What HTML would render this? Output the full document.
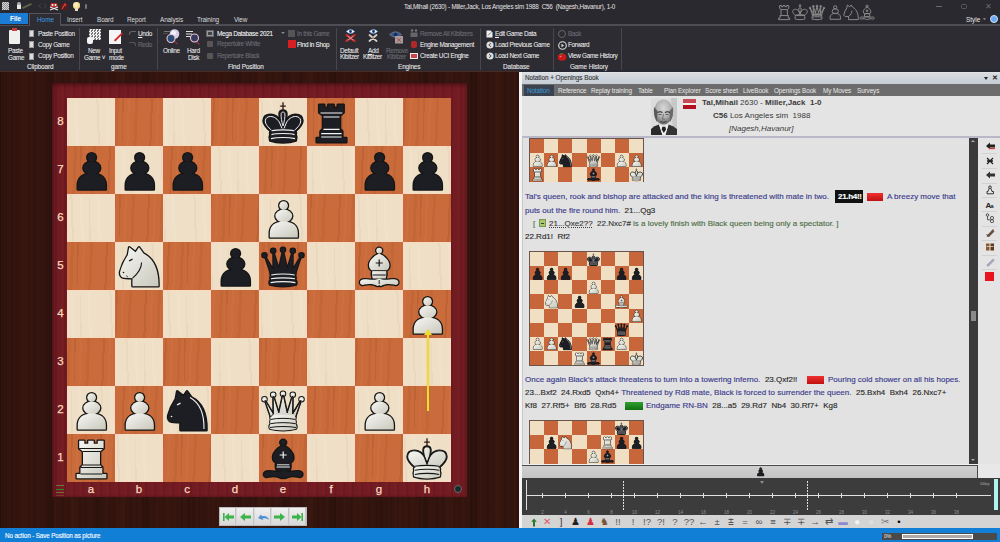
<!DOCTYPE html><html><head><meta charset="utf-8"><style>
*{margin:0;padding:0;box-sizing:border-box}
html,body{width:1000px;height:542px;overflow:hidden;background:#2b2a30;font-family:"Liberation Sans",sans-serif;font-size:7px;color:#e6e6e6}
.a{position:absolute}
.t{white-space:pre;line-height:10px;transform:translateY(-5px)}
.rb{font-size:6.4px;color:#f0f0f0;letter-spacing:-0.3px;-webkit-text-stroke:0.05px #f0f0f0}
.gr{color:#6c6c72;-webkit-text-stroke:0.1px #6c6c72}
.gl{font-size:6.4px;color:#e4e4e4;letter-spacing:-0.1px;-webkit-text-stroke:0.1px #e4e4e4}
#left{left:0;top:72px;width:519px;height:457px;background:#33140e;
 background-image:repeating-linear-gradient(90deg,rgba(0,0,0,.10) 0 1px,rgba(0,0,0,0) 1px 4px,rgba(110,55,35,.10) 4px 5px,rgba(0,0,0,0) 5px 11px,rgba(0,0,0,.08) 11px 13px,rgba(0,0,0,0) 13px 17px),repeating-linear-gradient(90deg,rgba(0,0,0,.10) 0 7px,rgba(0,0,0,0) 7px 23px,rgba(90,45,25,.08) 23px 31px,rgba(0,0,0,0) 31px 47px);}
#frame{left:52px;top:83px;width:415px;height:414px;background:#721b22;
 background-image:repeating-linear-gradient(90deg,rgba(255,80,80,.03) 0 3px,rgba(0,0,0,.06) 3px 5px,rgba(0,0,0,0) 5px 9px);box-shadow:inset 0 2px 4px rgba(0,0,0,.35),inset 2px 0 3px rgba(0,0,0,.2)}
.lbl{color:#f8dcc0;font-size:11.5px;text-align:center;width:48px;line-height:12px;-webkit-text-stroke:0.25px #f8dcc0}
.rk{color:#f8dcc0;font-size:11.5px;width:12px;text-align:center;line-height:12px;-webkit-text-stroke:0.25px #f8dcc0}
.nt{font-size:8px;color:#2a2a2a;white-space:pre;line-height:10px;transform:translateY(-5px);-webkit-text-stroke:0.15px currentColor}
.cm{color:#3c3c8c}
.gv{color:#4f6f45}
</style></head><body><svg width="0" height="0" style="position:absolute"><defs><linearGradient id="gw" x1="0" y1="0" x2="1" y2="1"><stop offset="0" stop-color="#f8f8f4"/><stop offset="1" stop-color="#c8c8bc"/></linearGradient></defs></svg><div class="a" style="left:0;top:0;width:1000px;height:25px;background:#2a292f"></div><div class="a" style="left:1.5px;top:2px;width:7.5px;height:8px;background:repeating-conic-gradient(#d8d8d8 0 25%,#8a8a8a 0 50%) 0 0/2px 2px"></div><div class="a" style="left:16.5px;top:2px;width:4.5px;height:3px;background:#aaa;border-radius:2px 2px 0 0"></div><div class="a" style="left:17px;top:5px;width:4px;height:4px;background:#e8e8e8"></div><div class="a" style="left:22px;top:5px;width:10px;height:2px;background:#5a6448;transform:rotate(-25deg)"></div><div class="a" style="left:39px;top:4px;width:4px;height:4px;border-left:1px solid #3c3c40;border-bottom:1px solid #3c3c40;transform:rotate(45deg)"></div><div class="a" style="left:42px;top:4px;width:4px;height:4px;border-right:1px solid #3c3c40;border-top:1px solid #3c3c40;transform:rotate(45deg)"></div><svg class="a" style="left:49px;top:1.5px" width="10" height="9" viewBox="0 0 10 9"><path d="M2,1h6l1,4h-8z" fill="#b82828"/><path d="M1,5L9,8M9,5L1,8" stroke="#f0e0e0" stroke-width="1.3"/><circle cx="3.5" cy="3" r="1" fill="#fff"/><circle cx="6.5" cy="3" r="1" fill="#fff"/></svg><svg class="a" style="left:60px;top:1.5px" width="8" height="9" viewBox="0 0 8 9"><circle cx="4" cy="4.5" r="3.8" fill="#5a1a1a"/><path d="M2,7L5,2L6,4" stroke="#e04040" stroke-width="1.2" fill="none"/></svg><div class="a" style="left:73px;top:2px;width:6.5px;height:6.5px;background:radial-gradient(circle at 40% 40%,#fff8d0,#e8c860);border-radius:50%"></div><div class="a" style="left:74.5px;top:8px;width:3.5px;height:2.5px;background:#e8e0c0"></div><div class="a" style="left:84.5px;top:4px;width:2.5px;height:5px;background:#777;border-radius:1px"></div><div class="a t " style="left:404px;top:6.5px;font-size:6.3px;letter-spacing:-0.22px;color:#e4e4e4">Tal,Mihail (2630) - Miller,Jack, Los Angeles sim 1988  C56  (Nagesh,Havanur), 1-0</div><svg class="a" style="left:775px;top:2.5px" width="18" height="18" viewBox="0 0 48 48"><g fill="none" stroke="#8c8c8c" stroke-width="2.6" stroke-linejoin="round"><path d="M12.2,6.8L17.3,6.8L17.3,9.8L21.3,9.8L21.3,6.8L26.7,6.8L26.7,9.8L30.8,9.8L30.8,6.8L36.6,6.8L36.6,14.5L33,17.5L33,31L35.3,33.5L35.3,40L39.3,40L39.3,44.3L9.7,44.3L9.7,40L13.5,40L13.5,33.5L16,31L16,17.5L12.2,14.5Z"/><path d="M16,17.5H33M13.5,33.5H35.3"/></g></svg><svg class="a" style="left:791px;top:2.5px" width="18" height="18" viewBox="0 0 48 48"><g fill="none" stroke="#8c8c8c" stroke-width="2.6" stroke-linejoin="round"><path d="M12.2,33.5C8,30 4.5,26 4.6,22.5C4.8,18.5 8,16.8 11.5,16.8C16,16.8 19.5,19.5 22,24L24,29L26,24C28.5,19.5 32,16.8 36.5,16.8C40,16.8 43.2,18.5 43.4,22.5C43.5,26 40,30 35.8,33.5Z"/><path d="M24,30C22,25 20.3,19 20.6,15.5C20.9,13.5 22.3,12.6 24,12.6C25.7,12.6 27.1,13.5 27.4,15.5C27.7,19 26,25 24,30Z"/><path d="M12,32.3C18,31 30,31 36,32.3C37,34 37,35.5 36.6,36.4C37.4,38 37.4,41 36.8,42.6C30,45 18,45 11.2,42.6C10.6,41 10.6,38 11.4,36.4C11,35.5 11,34 12,32.3Z"/><path d="M24,3V12M20.5,7.5H27.5"/></g></svg><svg class="a" style="left:808px;top:2.5px" width="18" height="18" viewBox="0 0 48 48"><g fill="none" stroke="#8c8c8c" stroke-width="2.6" stroke-linejoin="round"><path d="M11.5,31L5.5,13.3L14.4,28L14.2,8.8L19.8,27L24,7.8L28.2,27L33.8,8.8L33.6,28L42.5,13.3L36.5,31Z"/><path d="M11.8,29.8C18,28.4 30,28.4 36.2,29.8C36.8,31 36.8,32.5 36.3,33.4C37,35 37,36.5 36.5,37.7C37.6,39 37.8,41.5 37.2,42.8C30,45 18,45 10.8,42.8C10.2,41.5 10.4,39 11.5,37.7C11,36.5 11,35 11.7,33.4C11.2,32.5 11.2,31 11.8,29.8Z"/><circle cx="5.5" cy="13.3" r="2.3"/><circle cx="14.2" cy="8.8" r="2.3"/><circle cx="24" cy="7.8" r="2.3"/><circle cx="33.8" cy="8.8" r="2.3"/><circle cx="42.5" cy="13.3" r="2.3"/><path d="M11.7,33.4C18,32 30,32 36.3,33.4M11.5,37.7C18,36.3 30,36.3 36.5,37.7"/></g></svg><svg class="a" style="left:825.5px;top:2.5px" width="18" height="18" viewBox="0 0 48 48"><g fill="none" stroke="#8c8c8c" stroke-width="2.6" stroke-linejoin="round"><circle cx="24.6" cy="11.5" r="4.3"/><ellipse cx="24.8" cy="22" rx="8.4" ry="6.4"/><path d="M10.8,43.4L10.8,39C10.8,31 17,27.5 24.8,27.5C32.6,27.5 38.8,31 38.8,39L38.8,43.4Z"/></g></svg><svg class="a" style="left:841.5px;top:2.5px" width="18" height="18" viewBox="0 0 48 48"><g fill="none" stroke="#8c8c8c" stroke-width="2.6" stroke-linejoin="round"><path d="M17.5,44.3L43.5,44.3C43.8,31 40.5,17.5 28.5,11.5L24,5.3L20.6,10.3L14.2,5.3L12.8,13C9.5,18 6.5,24.5 5.2,29.5C4.5,32.5 6,35.5 8.6,35.8C11.5,36.2 14.5,36 17.6,36.2C17.4,39 17.4,42 17.5,44.3Z"/><path d="M26.6,20.5C26.5,26 24,30.5 17.6,36.2"/></g></svg><svg class="a" style="left:858px;top:2.5px" width="18" height="18" viewBox="0 0 48 48"><g fill="none" stroke="#8c8c8c" stroke-width="2.6" stroke-linejoin="round"><circle cx="24.2" cy="8.6" r="2.9"/><path d="M24.2,11.4C30,14 34.6,19 34.4,23.5C34.3,26.5 32.5,28 31,28.6L17.4,28.6C15.9,28 14.1,26.5 14,23.5C13.8,19 18.4,14 24.2,11.4Z"/><path d="M17.6,28.2L30.8,28.2C31.6,30 31.5,34 30.6,36.4L17.8,36.4C16.9,34 16.8,30 17.6,28.2Z"/><path d="M24.2,36.6C20,38.8 14,37.3 9.5,37.3C6.5,37.3 4.8,38.8 5,40.8C5.3,42.8 7.5,43.4 9.5,42.6C14,41.6 19,42 22,43.8C23,44.3 24.2,43.6 24.2,42.6C24.2,43.6 25.4,44.3 26.4,43.8C29.4,42 34.4,41.6 38.9,42.6C40.9,43.4 43.1,42.8 43.4,40.8C43.6,38.8 41.9,37.3 38.9,37.3C34.4,37.3 28.4,38.8 24.2,36.6Z"/><path d="M24.2,17.5V24.5M20.7,21H27.7"/></g></svg><div class="a" style="left:936px;top:6px;width:6px;height:1px;background:#6a6a6a"></div><div class="a" style="left:961px;top:3.5px;width:5.5px;height:5.5px;border:1px solid #5a5a5a;border-radius:1.5px"></div><div class="a" style="left:984.5px;top:1.5px;font-size:8px;color:#6a6a6a;line-height:10px">&#x2715;</div><div class="a" style="left:0;top:12.6px;width:28px;height:11.8px;background:#1a7cd4"></div><div class="a t " style="left:10px;top:19.3px;font-size:6.4px;color:#fff;font-weight:bold">File</div><div class="a" style="left:29px;top:13px;width:32px;height:12.5px;border:1px solid #55545b;border-bottom:none;background:#2e2d33"></div><div class="a t " style="left:37px;top:19.5px;font-size:6.4px;color:#3c9ee0">Home</div><div class="a t " style="left:67px;top:19.5px;font-size:6.4px;color:#dcdcdc;letter-spacing:-0.1px">Insert</div><div class="a t " style="left:97px;top:19.5px;font-size:6.4px;color:#dcdcdc;letter-spacing:-0.1px">Board</div><div class="a t " style="left:127px;top:19.5px;font-size:6.4px;color:#dcdcdc;letter-spacing:-0.1px">Report</div><div class="a t " style="left:160px;top:19.5px;font-size:6.4px;color:#dcdcdc;letter-spacing:-0.1px">Analysis</div><div class="a t " style="left:197px;top:19.5px;font-size:6.4px;color:#dcdcdc;letter-spacing:-0.1px">Training</div><div class="a t " style="left:234px;top:19.5px;font-size:6.4px;color:#dcdcdc;letter-spacing:-0.1px">View</div><div class="a t " style="left:966px;top:19.5px;font-size:6.4px;color:#e8e8e8">Style</div><div class="a" style="left:983px;top:18px;width:3px;height:2px;border-top:2px solid #777;border-left:1.5px solid transparent;border-right:1.5px solid transparent"></div><div class="a" style="left:990px;top:15px;width:8px;height:8px;background:#6aa8f0;border-radius:50%;border:1px solid #cfe3fa"></div><div class="a" style="left:60px;top:24px;width:940px;height:1.5px;background:#4e4d54"></div><div class="a" style="left:0;top:25.5px;width:1000px;height:46.5px;background:#2d2c32"></div><div class="a" style="left:0;top:24.5px;width:29px;height:1px;background:#4e4d54"></div><div class="a" style="left:0;top:68.5px;width:1000px;height:3.5px;background:linear-gradient(#2b2c34,#262833)"></div><div class="a" style="left:0;top:71px;width:519px;height:2px;background:#4a2a22"></div><div class="a" style="left:79px;top:28px;width:1px;height:42px;background:#48474e"></div><div class="a" style="left:157px;top:28px;width:1px;height:42px;background:#48474e"></div><div class="a" style="left:336px;top:28px;width:1px;height:42px;background:#48474e"></div><div class="a" style="left:480px;top:28px;width:1px;height:42px;background:#48474e"></div><div class="a" style="left:553px;top:28px;width:1px;height:42px;background:#48474e"></div><div class="a" style="left:621px;top:28px;width:1px;height:42px;background:#48474e"></div><div class="a" style="left:9px;top:30px;width:11px;height:14px;background:#f2f0ee;border-radius:1px"></div><div class="a" style="left:12px;top:28px;width:5px;height:3px;background:#c83c3c"></div><div class="a t rb" style="left:8px;top:50.5px;">Paste</div><div class="a t rb" style="left:8px;top:57.5px;">Game</div><div class="a" style="left:29px;top:30.0px;width:5px;height:7px;background:#ddd;border:1px solid #999"></div><div class="a" style="left:29px;top:41.0px;width:5px;height:7px;background:#ddd;border:1px solid #999"></div><div class="a" style="left:29px;top:52.5px;width:5px;height:7px;background:#ddd;border:1px solid #999"></div><div class="a t rb" style="left:38px;top:33.5px;">Paste Position</div><div class="a t rb" style="left:38px;top:44.8px;">Copy Game</div><div class="a t rb" style="left:38px;top:56.2px;">Copy Position</div><div class="a t gl" style="left:27px;top:67px;">Clipboard</div><div class="a" style="left:89px;top:29px;width:12px;height:11px;background:repeating-conic-gradient(#f0f0f0 0 25%,#777 0 50%) 0 0/3px 3px"></div><div class="a" style="left:87px;top:37px;width:6px;height:7px;background:#f4f4f4;border-radius:2px"></div><div class="a t rb" style="left:88px;top:50.5px;">New</div><div class="a t rb" style="left:84px;top:57.5px;">Game &#709;</div><div class="a" style="left:109px;top:30px;width:12px;height:14px;background:#f4f4f4"></div><div class="a" style="left:113px;top:36px;width:11px;height:2px;background:#d02828;transform:rotate(-45deg)"></div><div class="a t rb" style="left:109px;top:50.5px;">Input</div><div class="a t rb" style="left:109px;top:57.5px;">mode</div><div class="a" style="left:129px;top:31px;width:7px;height:4px;border-top:1px solid #666;border-left:1px solid #666;border-radius:3px 0 0 0"></div><div class="a t rb" style="left:138px;top:33.5px;"><u>U</u>ndo</div><div class="a" style="left:129px;top:42px;width:7px;height:4px;border-top:1px solid #555;border-right:1px solid #555;border-radius:0 3px 0 0"></div><div class="a t rb gr" style="left:138px;top:44.8px;">Redo</div><div class="a t gl" style="left:111px;top:67px;">game</div><svg class="a" style="left:162px;top:28px" width="20" height="17" viewBox="0 0 20 17"><path d="M2,3.5H8" stroke="#777" stroke-width="1"/><path d="M1,5.5H6" stroke="#555" stroke-width=".8"/><circle cx="12.5" cy="6" r="4.8" fill="#d8d0e8"/><circle cx="11.5" cy="5" r="2.5" fill="#f4f0fa"/><path d="M12.5,13.5L15.5,16" stroke="#8a3040" stroke-width="1.6"/><circle cx="9" cy="10.5" r="4" fill="#2a4a78" stroke="#e8c8d0" stroke-width="1.1"/></svg><div class="a t rb" style="left:163px;top:50.7px;">Online</div><svg class="a" style="left:185px;top:30px" width="18" height="15" viewBox="0 0 18 15"><path d="M1,1.5H8M1,4H7M1,6.5H7" stroke="#e0e0e0" stroke-width="1.2"/><path d="M11.5,11.5L14.5,14.5" stroke="#8a3040" stroke-width="1.6"/><circle cx="9.5" cy="8" r="4" fill="#3a3a60" stroke="#e8c8d0" stroke-width="1.1"/></svg><div class="a t rb" style="left:187px;top:50.7px;">Hard</div><div class="a t rb" style="left:188px;top:57.5px;">Disk</div><div class="a" style="left:206px;top:29.5px;width:8px;height:7px;background:#9a9a9a;border:1px solid #666"></div><div class="a" style="left:208px;top:31.5px;width:4px;height:3px;background:#444"></div><div class="a t rb" style="left:217px;top:33.5px;color:#ffffff">Mega Database 2021</div><div class="a" style="left:281px;top:32px;width:0;height:0;border-top:2px solid #888;border-left:2px solid transparent;border-right:2px solid transparent"></div><div class="a" style="left:207px;top:41px;width:6px;height:6px;background:#5a5555;border-radius:1px"></div><div class="a t rb gr" style="left:217px;top:44.2px;">Repertoire White</div><div class="a" style="left:207px;top:53px;width:6px;height:6px;background:#5a5555;border-radius:1px"></div><div class="a t rb gr" style="left:217px;top:55.9px;">Repertoire Black</div><div class="a t gl" style="left:228px;top:67px;">Find Position</div><div class="a" style="left:288px;top:30px;width:7px;height:7px;background:#555"></div><div class="a t rb gr" style="left:297px;top:33.5px;">In this Game</div><div class="a" style="left:288px;top:40px;width:8px;height:8px;background:#d42020"></div><div class="a t rb" style="left:297px;top:44.6px;color:#fff">Find in Shop</div><svg class="a" style="left:346px;top:29px" width="9" height="5" viewBox="0 0 9 5"><path d="M0.3,2.5Q4.5,-1.5 8.7,2.5Q4.5,6.5 0.3,2.5Z" fill="#f4f8ff" stroke="#6aa0e0" stroke-width=".6"/><circle cx="4.5" cy="2.5" r="1.4" fill="#1a3a6a"/></svg><svg class="a" style="left:345px;top:34px" width="11" height="8" viewBox="0 0 11 8"><path d="M1.5,1L9.5,7M9.5,1L1.5,7" stroke="#b82a2a" stroke-width="2.4" stroke-linecap="round"/><path d="M2.5,2L8.5,6.2M8.5,2L2.5,6.2" stroke="#f0c0c0" stroke-width=".7"/></svg><svg class="a" style="left:368.5px;top:29px" width="9" height="5" viewBox="0 0 9 5"><path d="M0.3,2.5Q4.5,-1.5 8.7,2.5Q4.5,6.5 0.3,2.5Z" fill="#f4f8ff" stroke="#6aa0e0" stroke-width=".6"/><circle cx="4.5" cy="2.5" r="1.4" fill="#1a3a6a"/></svg><svg class="a" style="left:368px;top:34px" width="10" height="8" viewBox="0 0 10 8"><path d="M1.5,1L8.5,7M8.5,1L1.5,7" stroke="#d8d0c8" stroke-width="1.8" stroke-linecap="round"/><path d="M5,3V5" stroke="#806050" stroke-width="1"/></svg><svg class="a" style="left:389px;top:30px" width="15" height="14" viewBox="0 0 15 14"><path d="M0.5,4.5Q6.5,-1 12.5,4.5Q6.5,10 0.5,4.5Z" fill="#3a5a8a" stroke="#6a7a90" stroke-width=".8"/><circle cx="6.5" cy="4.5" r="1.8" fill="#1a2a5a"/><rect x="6" y="6" width="8" height="7.5" fill="#a89a9a"/><path d="M8,8L12,12M12,8L8,12" stroke="#b04040" stroke-width=".8"/></svg><div class="a t rb" style="left:340px;top:50.7px;">Default</div><div class="a t rb" style="left:340px;top:57px;">Kibitzer</div><div class="a t rb" style="left:368px;top:50.7px;"><u>A</u>dd</div><div class="a t rb" style="left:363px;top:57px;">Kibitzer</div><div class="a t rb gr" style="left:386px;top:50.7px;">Remove</div><div class="a t rb gr" style="left:387px;top:57px;">Kibitzer</div><svg class="a" style="left:410px;top:29px" width="8" height="8" viewBox="0 0 8 8"><circle cx="2" cy="1.5" r="1.2" fill="#777"/><circle cx="6" cy="1.5" r="1.2" fill="#777"/><rect x="0.5" y="3.5" width="7" height="4.5" fill="#666"/></svg><div class="a t rb gr" style="left:420px;top:33.5px;">Remove All Kibitzers</div><div class="a" style="left:411px;top:41px;width:6px;height:7px;background:#b02828;border-radius:2px"></div><div class="a t rb" style="left:420px;top:44.8px;">Engine Management</div><div class="a" style="left:410px;top:53px;width:8px;height:6px;background:#c84848;border:1px solid #eee"></div><div class="a t rb" style="left:420px;top:56px;">Create UCI Engine</div><div class="a t gl" style="left:398px;top:67px;">Engines</div><svg class="a" style="left:486px;top:29.5px" width="7" height="8" viewBox="0 0 7 8"><path d="M0.5,0.5H4.5L6.5,2.5V7.5H0.5Z" fill="#eee"/><path d="M2,5.5L5,2.5" stroke="#555" stroke-width=".8"/></svg><div class="a t rb" style="left:495px;top:33.5px;"><u>E</u>dit Game Data</div><svg class="a" style="left:485.5px;top:41px" width="8" height="8" viewBox="0 0 8 8"><circle cx="4" cy="4" r="3.6" fill="#ddd"/><path d="M5,2.2L2.8,4L5,5.8" stroke="#555" stroke-width="1" fill="none"/></svg><div class="a t rb" style="left:495px;top:44.8px;">Load Previous Game</div><svg class="a" style="left:485.5px;top:52px" width="8" height="8" viewBox="0 0 8 8"><circle cx="4" cy="4" r="3.6" fill="#ddd"/><path d="M3,2.2L5.2,4L3,5.8" stroke="#555" stroke-width="1" fill="none"/></svg><div class="a t rb" style="left:495px;top:56px;">Load Next Game</div><div class="a t gl" style="left:503px;top:67px;">Database</div><div class="a" style="left:558px;top:30px;width:8px;height:8px;border:1px solid #666;border-radius:50%"></div><div class="a t rb gr" style="left:568px;top:33.5px;">Back</div><svg class="a" style="left:557.5px;top:40.5px" width="9" height="9" viewBox="0 0 9 9"><circle cx="4.5" cy="4.5" r="3.8" fill="none" stroke="#e0e0e0" stroke-width="1.1"/><path d="M3.5,2.8L6,4.5L3.5,6.2Z" fill="#e0e0e0"/></svg><div class="a t rb" style="left:568px;top:44.8px;">Forward</div><svg class="a" style="left:557px;top:51.5px" width="10" height="9" viewBox="0 0 10 9"><ellipse cx="5" cy="5.2" rx="4.3" ry="3.6" fill="#c81818"/><path d="M2,2.5Q4,0.5 6.5,1.5Q5,3 2,2.5Z" fill="#3a8a3a"/><ellipse cx="3.5" cy="4.5" rx="1" ry=".7" fill="#f08080"/></svg><div class="a t rb" style="left:568px;top:56px;">View Game History</div><div class="a t gl" style="left:570px;top:67px;">Game History</div><div id="left" class="a"></div><div id="frame" class="a"></div><div class="a" style="left:67.00px;top:98.00px;width:48.30px;height:48.30px;background:#efdfc6;background-image:repeating-linear-gradient(88deg,rgba(150,90,40,.05) 0 2px,rgba(0,0,0,0) 2px 9px,rgba(255,255,255,.08) 9px 12px,rgba(0,0,0,0) 12px 31px);background-position:0px 0;box-shadow:inset 0 0 0 1px rgba(255,215,190,.7)"></div><div class="a" style="left:115.00px;top:98.00px;width:48.30px;height:48.30px;background:#c96b3b;background-image:repeating-linear-gradient(92deg,rgba(90,30,0,.10) 0 2px,rgba(0,0,0,0) 2px 6px,rgba(255,160,100,.07) 6px 8px,rgba(0,0,0,0) 8px 13px,rgba(90,30,0,.06) 13px 16px,rgba(0,0,0,0) 16px 29px);background-position:7px 0"></div><div class="a" style="left:163.00px;top:98.00px;width:48.30px;height:48.30px;background:#efdfc6;background-image:repeating-linear-gradient(88deg,rgba(150,90,40,.05) 0 2px,rgba(0,0,0,0) 2px 9px,rgba(255,255,255,.08) 9px 12px,rgba(0,0,0,0) 12px 31px);background-position:10px 0;box-shadow:inset 0 0 0 1px rgba(255,215,190,.7)"></div><div class="a" style="left:211.00px;top:98.00px;width:48.30px;height:48.30px;background:#c96b3b;background-image:repeating-linear-gradient(92deg,rgba(90,30,0,.10) 0 2px,rgba(0,0,0,0) 2px 6px,rgba(255,160,100,.07) 6px 8px,rgba(0,0,0,0) 8px 13px,rgba(90,30,0,.06) 13px 16px,rgba(0,0,0,0) 16px 29px);background-position:21px 0"></div><div class="a" style="left:259.00px;top:98.00px;width:48.30px;height:48.30px;background:#efdfc6;background-image:repeating-linear-gradient(88deg,rgba(150,90,40,.05) 0 2px,rgba(0,0,0,0) 2px 9px,rgba(255,255,255,.08) 9px 12px,rgba(0,0,0,0) 12px 31px);background-position:20px 0;box-shadow:inset 0 0 0 1px rgba(255,215,190,.7)"></div><div class="a" style="left:307.00px;top:98.00px;width:48.30px;height:48.30px;background:#c96b3b;background-image:repeating-linear-gradient(92deg,rgba(90,30,0,.10) 0 2px,rgba(0,0,0,0) 2px 6px,rgba(255,160,100,.07) 6px 8px,rgba(0,0,0,0) 8px 13px,rgba(90,30,0,.06) 13px 16px,rgba(0,0,0,0) 16px 29px);background-position:6px 0"></div><div class="a" style="left:355.00px;top:98.00px;width:48.30px;height:48.30px;background:#efdfc6;background-image:repeating-linear-gradient(88deg,rgba(150,90,40,.05) 0 2px,rgba(0,0,0,0) 2px 9px,rgba(255,255,255,.08) 9px 12px,rgba(0,0,0,0) 12px 31px);background-position:30px 0;box-shadow:inset 0 0 0 1px rgba(255,215,190,.7)"></div><div class="a" style="left:403.00px;top:98.00px;width:48.30px;height:48.30px;background:#c96b3b;background-image:repeating-linear-gradient(92deg,rgba(90,30,0,.10) 0 2px,rgba(0,0,0,0) 2px 6px,rgba(255,160,100,.07) 6px 8px,rgba(0,0,0,0) 8px 13px,rgba(90,30,0,.06) 13px 16px,rgba(0,0,0,0) 16px 29px);background-position:20px 0"></div><div class="a" style="left:67.00px;top:146.00px;width:48.30px;height:48.30px;background:#c96b3b;background-image:repeating-linear-gradient(92deg,rgba(90,30,0,.10) 0 2px,rgba(0,0,0,0) 2px 6px,rgba(255,160,100,.07) 6px 8px,rgba(0,0,0,0) 8px 13px,rgba(90,30,0,.06) 13px 16px,rgba(0,0,0,0) 16px 29px);background-position:13px 0"></div><div class="a" style="left:115.00px;top:146.00px;width:48.30px;height:48.30px;background:#efdfc6;background-image:repeating-linear-gradient(88deg,rgba(150,90,40,.05) 0 2px,rgba(0,0,0,0) 2px 9px,rgba(255,255,255,.08) 9px 12px,rgba(0,0,0,0) 12px 31px);background-position:16px 0;box-shadow:inset 0 0 0 1px rgba(255,215,190,.7)"></div><div class="a" style="left:163.00px;top:146.00px;width:48.30px;height:48.30px;background:#c96b3b;background-image:repeating-linear-gradient(92deg,rgba(90,30,0,.10) 0 2px,rgba(0,0,0,0) 2px 6px,rgba(255,160,100,.07) 6px 8px,rgba(0,0,0,0) 8px 13px,rgba(90,30,0,.06) 13px 16px,rgba(0,0,0,0) 16px 29px);background-position:27px 0"></div><div class="a" style="left:211.00px;top:146.00px;width:48.30px;height:48.30px;background:#efdfc6;background-image:repeating-linear-gradient(88deg,rgba(150,90,40,.05) 0 2px,rgba(0,0,0,0) 2px 9px,rgba(255,255,255,.08) 9px 12px,rgba(0,0,0,0) 12px 31px);background-position:26px 0;box-shadow:inset 0 0 0 1px rgba(255,215,190,.7)"></div><div class="a" style="left:259.00px;top:146.00px;width:48.30px;height:48.30px;background:#c96b3b;background-image:repeating-linear-gradient(92deg,rgba(90,30,0,.10) 0 2px,rgba(0,0,0,0) 2px 6px,rgba(255,160,100,.07) 6px 8px,rgba(0,0,0,0) 8px 13px,rgba(90,30,0,.06) 13px 16px,rgba(0,0,0,0) 16px 29px);background-position:12px 0"></div><div class="a" style="left:307.00px;top:146.00px;width:48.30px;height:48.30px;background:#efdfc6;background-image:repeating-linear-gradient(88deg,rgba(150,90,40,.05) 0 2px,rgba(0,0,0,0) 2px 9px,rgba(255,255,255,.08) 9px 12px,rgba(0,0,0,0) 12px 31px);background-position:5px 0;box-shadow:inset 0 0 0 1px rgba(255,215,190,.7)"></div><div class="a" style="left:355.00px;top:146.00px;width:48.30px;height:48.30px;background:#c96b3b;background-image:repeating-linear-gradient(92deg,rgba(90,30,0,.10) 0 2px,rgba(0,0,0,0) 2px 6px,rgba(255,160,100,.07) 6px 8px,rgba(0,0,0,0) 8px 13px,rgba(90,30,0,.06) 13px 16px,rgba(0,0,0,0) 16px 29px);background-position:26px 0"></div><div class="a" style="left:403.00px;top:146.00px;width:48.30px;height:48.30px;background:#efdfc6;background-image:repeating-linear-gradient(88deg,rgba(150,90,40,.05) 0 2px,rgba(0,0,0,0) 2px 9px,rgba(255,255,255,.08) 9px 12px,rgba(0,0,0,0) 12px 31px);background-position:15px 0;box-shadow:inset 0 0 0 1px rgba(255,215,190,.7)"></div><div class="a" style="left:67.00px;top:194.00px;width:48.30px;height:48.30px;background:#efdfc6;background-image:repeating-linear-gradient(88deg,rgba(150,90,40,.05) 0 2px,rgba(0,0,0,0) 2px 9px,rgba(255,255,255,.08) 9px 12px,rgba(0,0,0,0) 12px 31px);background-position:22px 0;box-shadow:inset 0 0 0 1px rgba(255,215,190,.7)"></div><div class="a" style="left:115.00px;top:194.00px;width:48.30px;height:48.30px;background:#c96b3b;background-image:repeating-linear-gradient(92deg,rgba(90,30,0,.10) 0 2px,rgba(0,0,0,0) 2px 6px,rgba(255,160,100,.07) 6px 8px,rgba(0,0,0,0) 8px 13px,rgba(90,30,0,.06) 13px 16px,rgba(0,0,0,0) 16px 29px);background-position:4px 0"></div><div class="a" style="left:163.00px;top:194.00px;width:48.30px;height:48.30px;background:#efdfc6;background-image:repeating-linear-gradient(88deg,rgba(150,90,40,.05) 0 2px,rgba(0,0,0,0) 2px 9px,rgba(255,255,255,.08) 9px 12px,rgba(0,0,0,0) 12px 31px);background-position:1px 0;box-shadow:inset 0 0 0 1px rgba(255,215,190,.7)"></div><div class="a" style="left:211.00px;top:194.00px;width:48.30px;height:48.30px;background:#c96b3b;background-image:repeating-linear-gradient(92deg,rgba(90,30,0,.10) 0 2px,rgba(0,0,0,0) 2px 6px,rgba(255,160,100,.07) 6px 8px,rgba(0,0,0,0) 8px 13px,rgba(90,30,0,.06) 13px 16px,rgba(0,0,0,0) 16px 29px);background-position:18px 0"></div><div class="a" style="left:259.00px;top:194.00px;width:48.30px;height:48.30px;background:#efdfc6;background-image:repeating-linear-gradient(88deg,rgba(150,90,40,.05) 0 2px,rgba(0,0,0,0) 2px 9px,rgba(255,255,255,.08) 9px 12px,rgba(0,0,0,0) 12px 31px);background-position:11px 0;box-shadow:inset 0 0 0 1px rgba(255,215,190,.7)"></div><div class="a" style="left:307.00px;top:194.00px;width:48.30px;height:48.30px;background:#c96b3b;background-image:repeating-linear-gradient(92deg,rgba(90,30,0,.10) 0 2px,rgba(0,0,0,0) 2px 6px,rgba(255,160,100,.07) 6px 8px,rgba(0,0,0,0) 8px 13px,rgba(90,30,0,.06) 13px 16px,rgba(0,0,0,0) 16px 29px);background-position:3px 0"></div><div class="a" style="left:355.00px;top:194.00px;width:48.30px;height:48.30px;background:#efdfc6;background-image:repeating-linear-gradient(88deg,rgba(150,90,40,.05) 0 2px,rgba(0,0,0,0) 2px 9px,rgba(255,255,255,.08) 9px 12px,rgba(0,0,0,0) 12px 31px);background-position:21px 0;box-shadow:inset 0 0 0 1px rgba(255,215,190,.7)"></div><div class="a" style="left:403.00px;top:194.00px;width:48.30px;height:48.30px;background:#c96b3b;background-image:repeating-linear-gradient(92deg,rgba(90,30,0,.10) 0 2px,rgba(0,0,0,0) 2px 6px,rgba(255,160,100,.07) 6px 8px,rgba(0,0,0,0) 8px 13px,rgba(90,30,0,.06) 13px 16px,rgba(0,0,0,0) 16px 29px);background-position:17px 0"></div><div class="a" style="left:67.00px;top:242.00px;width:48.30px;height:48.30px;background:#c96b3b;background-image:repeating-linear-gradient(92deg,rgba(90,30,0,.10) 0 2px,rgba(0,0,0,0) 2px 6px,rgba(255,160,100,.07) 6px 8px,rgba(0,0,0,0) 8px 13px,rgba(90,30,0,.06) 13px 16px,rgba(0,0,0,0) 16px 29px);background-position:10px 0"></div><div class="a" style="left:115.00px;top:242.00px;width:48.30px;height:48.30px;background:#efdfc6;background-image:repeating-linear-gradient(88deg,rgba(150,90,40,.05) 0 2px,rgba(0,0,0,0) 2px 9px,rgba(255,255,255,.08) 9px 12px,rgba(0,0,0,0) 12px 31px);background-position:7px 0;box-shadow:inset 0 0 0 1px rgba(255,215,190,.7)"></div><div class="a" style="left:163.00px;top:242.00px;width:48.30px;height:48.30px;background:#c96b3b;background-image:repeating-linear-gradient(92deg,rgba(90,30,0,.10) 0 2px,rgba(0,0,0,0) 2px 6px,rgba(255,160,100,.07) 6px 8px,rgba(0,0,0,0) 8px 13px,rgba(90,30,0,.06) 13px 16px,rgba(0,0,0,0) 16px 29px);background-position:24px 0"></div><div class="a" style="left:211.00px;top:242.00px;width:48.30px;height:48.30px;background:#efdfc6;background-image:repeating-linear-gradient(88deg,rgba(150,90,40,.05) 0 2px,rgba(0,0,0,0) 2px 9px,rgba(255,255,255,.08) 9px 12px,rgba(0,0,0,0) 12px 31px);background-position:17px 0;box-shadow:inset 0 0 0 1px rgba(255,215,190,.7)"></div><div class="a" style="left:259.00px;top:242.00px;width:48.30px;height:48.30px;background:#c96b3b;background-image:repeating-linear-gradient(92deg,rgba(90,30,0,.10) 0 2px,rgba(0,0,0,0) 2px 6px,rgba(255,160,100,.07) 6px 8px,rgba(0,0,0,0) 8px 13px,rgba(90,30,0,.06) 13px 16px,rgba(0,0,0,0) 16px 29px);background-position:9px 0"></div><div class="a" style="left:307.00px;top:242.00px;width:48.30px;height:48.30px;background:#efdfc6;background-image:repeating-linear-gradient(88deg,rgba(150,90,40,.05) 0 2px,rgba(0,0,0,0) 2px 9px,rgba(255,255,255,.08) 9px 12px,rgba(0,0,0,0) 12px 31px);background-position:27px 0;box-shadow:inset 0 0 0 1px rgba(255,215,190,.7)"></div><div class="a" style="left:355.00px;top:242.00px;width:48.30px;height:48.30px;background:#c96b3b;background-image:repeating-linear-gradient(92deg,rgba(90,30,0,.10) 0 2px,rgba(0,0,0,0) 2px 6px,rgba(255,160,100,.07) 6px 8px,rgba(0,0,0,0) 8px 13px,rgba(90,30,0,.06) 13px 16px,rgba(0,0,0,0) 16px 29px);background-position:23px 0"></div><div class="a" style="left:403.00px;top:242.00px;width:48.30px;height:48.30px;background:#efdfc6;background-image:repeating-linear-gradient(88deg,rgba(150,90,40,.05) 0 2px,rgba(0,0,0,0) 2px 9px,rgba(255,255,255,.08) 9px 12px,rgba(0,0,0,0) 12px 31px);background-position:6px 0;box-shadow:inset 0 0 0 1px rgba(255,215,190,.7)"></div><div class="a" style="left:67.00px;top:290.00px;width:48.30px;height:48.30px;background:#efdfc6;background-image:repeating-linear-gradient(88deg,rgba(150,90,40,.05) 0 2px,rgba(0,0,0,0) 2px 9px,rgba(255,255,255,.08) 9px 12px,rgba(0,0,0,0) 12px 31px);background-position:13px 0;box-shadow:inset 0 0 0 1px rgba(255,215,190,.7)"></div><div class="a" style="left:115.00px;top:290.00px;width:48.30px;height:48.30px;background:#c96b3b;background-image:repeating-linear-gradient(92deg,rgba(90,30,0,.10) 0 2px,rgba(0,0,0,0) 2px 6px,rgba(255,160,100,.07) 6px 8px,rgba(0,0,0,0) 8px 13px,rgba(90,30,0,.06) 13px 16px,rgba(0,0,0,0) 16px 29px);background-position:1px 0"></div><div class="a" style="left:163.00px;top:290.00px;width:48.30px;height:48.30px;background:#efdfc6;background-image:repeating-linear-gradient(88deg,rgba(150,90,40,.05) 0 2px,rgba(0,0,0,0) 2px 9px,rgba(255,255,255,.08) 9px 12px,rgba(0,0,0,0) 12px 31px);background-position:23px 0;box-shadow:inset 0 0 0 1px rgba(255,215,190,.7)"></div><div class="a" style="left:211.00px;top:290.00px;width:48.30px;height:48.30px;background:#c96b3b;background-image:repeating-linear-gradient(92deg,rgba(90,30,0,.10) 0 2px,rgba(0,0,0,0) 2px 6px,rgba(255,160,100,.07) 6px 8px,rgba(0,0,0,0) 8px 13px,rgba(90,30,0,.06) 13px 16px,rgba(0,0,0,0) 16px 29px);background-position:15px 0"></div><div class="a" style="left:259.00px;top:290.00px;width:48.30px;height:48.30px;background:#efdfc6;background-image:repeating-linear-gradient(88deg,rgba(150,90,40,.05) 0 2px,rgba(0,0,0,0) 2px 9px,rgba(255,255,255,.08) 9px 12px,rgba(0,0,0,0) 12px 31px);background-position:2px 0;box-shadow:inset 0 0 0 1px rgba(255,215,190,.7)"></div><div class="a" style="left:307.00px;top:290.00px;width:48.30px;height:48.30px;background:#c96b3b;background-image:repeating-linear-gradient(92deg,rgba(90,30,0,.10) 0 2px,rgba(0,0,0,0) 2px 6px,rgba(255,160,100,.07) 6px 8px,rgba(0,0,0,0) 8px 13px,rgba(90,30,0,.06) 13px 16px,rgba(0,0,0,0) 16px 29px);background-position:0px 0"></div><div class="a" style="left:355.00px;top:290.00px;width:48.30px;height:48.30px;background:#efdfc6;background-image:repeating-linear-gradient(88deg,rgba(150,90,40,.05) 0 2px,rgba(0,0,0,0) 2px 9px,rgba(255,255,255,.08) 9px 12px,rgba(0,0,0,0) 12px 31px);background-position:12px 0;box-shadow:inset 0 0 0 1px rgba(255,215,190,.7)"></div><div class="a" style="left:403.00px;top:290.00px;width:48.30px;height:48.30px;background:#c96b3b;background-image:repeating-linear-gradient(92deg,rgba(90,30,0,.10) 0 2px,rgba(0,0,0,0) 2px 6px,rgba(255,160,100,.07) 6px 8px,rgba(0,0,0,0) 8px 13px,rgba(90,30,0,.06) 13px 16px,rgba(0,0,0,0) 16px 29px);background-position:14px 0"></div><div class="a" style="left:67.00px;top:338.00px;width:48.30px;height:48.30px;background:#c96b3b;background-image:repeating-linear-gradient(92deg,rgba(90,30,0,.10) 0 2px,rgba(0,0,0,0) 2px 6px,rgba(255,160,100,.07) 6px 8px,rgba(0,0,0,0) 8px 13px,rgba(90,30,0,.06) 13px 16px,rgba(0,0,0,0) 16px 29px);background-position:7px 0"></div><div class="a" style="left:115.00px;top:338.00px;width:48.30px;height:48.30px;background:#efdfc6;background-image:repeating-linear-gradient(88deg,rgba(150,90,40,.05) 0 2px,rgba(0,0,0,0) 2px 9px,rgba(255,255,255,.08) 9px 12px,rgba(0,0,0,0) 12px 31px);background-position:29px 0;box-shadow:inset 0 0 0 1px rgba(255,215,190,.7)"></div><div class="a" style="left:163.00px;top:338.00px;width:48.30px;height:48.30px;background:#c96b3b;background-image:repeating-linear-gradient(92deg,rgba(90,30,0,.10) 0 2px,rgba(0,0,0,0) 2px 6px,rgba(255,160,100,.07) 6px 8px,rgba(0,0,0,0) 8px 13px,rgba(90,30,0,.06) 13px 16px,rgba(0,0,0,0) 16px 29px);background-position:21px 0"></div><div class="a" style="left:211.00px;top:338.00px;width:48.30px;height:48.30px;background:#efdfc6;background-image:repeating-linear-gradient(88deg,rgba(150,90,40,.05) 0 2px,rgba(0,0,0,0) 2px 9px,rgba(255,255,255,.08) 9px 12px,rgba(0,0,0,0) 12px 31px);background-position:8px 0;box-shadow:inset 0 0 0 1px rgba(255,215,190,.7)"></div><div class="a" style="left:259.00px;top:338.00px;width:48.30px;height:48.30px;background:#c96b3b;background-image:repeating-linear-gradient(92deg,rgba(90,30,0,.10) 0 2px,rgba(0,0,0,0) 2px 6px,rgba(255,160,100,.07) 6px 8px,rgba(0,0,0,0) 8px 13px,rgba(90,30,0,.06) 13px 16px,rgba(0,0,0,0) 16px 29px);background-position:6px 0"></div><div class="a" style="left:307.00px;top:338.00px;width:48.30px;height:48.30px;background:#efdfc6;background-image:repeating-linear-gradient(88deg,rgba(150,90,40,.05) 0 2px,rgba(0,0,0,0) 2px 9px,rgba(255,255,255,.08) 9px 12px,rgba(0,0,0,0) 12px 31px);background-position:18px 0;box-shadow:inset 0 0 0 1px rgba(255,215,190,.7)"></div><div class="a" style="left:355.00px;top:338.00px;width:48.30px;height:48.30px;background:#c96b3b;background-image:repeating-linear-gradient(92deg,rgba(90,30,0,.10) 0 2px,rgba(0,0,0,0) 2px 6px,rgba(255,160,100,.07) 6px 8px,rgba(0,0,0,0) 8px 13px,rgba(90,30,0,.06) 13px 16px,rgba(0,0,0,0) 16px 29px);background-position:20px 0"></div><div class="a" style="left:403.00px;top:338.00px;width:48.30px;height:48.30px;background:#efdfc6;background-image:repeating-linear-gradient(88deg,rgba(150,90,40,.05) 0 2px,rgba(0,0,0,0) 2px 9px,rgba(255,255,255,.08) 9px 12px,rgba(0,0,0,0) 12px 31px);background-position:28px 0;box-shadow:inset 0 0 0 1px rgba(255,215,190,.7)"></div><div class="a" style="left:67.00px;top:386.00px;width:48.30px;height:48.30px;background:#efdfc6;background-image:repeating-linear-gradient(88deg,rgba(150,90,40,.05) 0 2px,rgba(0,0,0,0) 2px 9px,rgba(255,255,255,.08) 9px 12px,rgba(0,0,0,0) 12px 31px);background-position:4px 0;box-shadow:inset 0 0 0 1px rgba(255,215,190,.7)"></div><div class="a" style="left:115.00px;top:386.00px;width:48.30px;height:48.30px;background:#c96b3b;background-image:repeating-linear-gradient(92deg,rgba(90,30,0,.10) 0 2px,rgba(0,0,0,0) 2px 6px,rgba(255,160,100,.07) 6px 8px,rgba(0,0,0,0) 8px 13px,rgba(90,30,0,.06) 13px 16px,rgba(0,0,0,0) 16px 29px);background-position:27px 0"></div><div class="a" style="left:163.00px;top:386.00px;width:48.30px;height:48.30px;background:#efdfc6;background-image:repeating-linear-gradient(88deg,rgba(150,90,40,.05) 0 2px,rgba(0,0,0,0) 2px 9px,rgba(255,255,255,.08) 9px 12px,rgba(0,0,0,0) 12px 31px);background-position:14px 0;box-shadow:inset 0 0 0 1px rgba(255,215,190,.7)"></div><div class="a" style="left:211.00px;top:386.00px;width:48.30px;height:48.30px;background:#c96b3b;background-image:repeating-linear-gradient(92deg,rgba(90,30,0,.10) 0 2px,rgba(0,0,0,0) 2px 6px,rgba(255,160,100,.07) 6px 8px,rgba(0,0,0,0) 8px 13px,rgba(90,30,0,.06) 13px 16px,rgba(0,0,0,0) 16px 29px);background-position:12px 0"></div><div class="a" style="left:259.00px;top:386.00px;width:48.30px;height:48.30px;background:#efdfc6;background-image:repeating-linear-gradient(88deg,rgba(150,90,40,.05) 0 2px,rgba(0,0,0,0) 2px 9px,rgba(255,255,255,.08) 9px 12px,rgba(0,0,0,0) 12px 31px);background-position:24px 0;box-shadow:inset 0 0 0 1px rgba(255,215,190,.7)"></div><div class="a" style="left:307.00px;top:386.00px;width:48.30px;height:48.30px;background:#c96b3b;background-image:repeating-linear-gradient(92deg,rgba(90,30,0,.10) 0 2px,rgba(0,0,0,0) 2px 6px,rgba(255,160,100,.07) 6px 8px,rgba(0,0,0,0) 8px 13px,rgba(90,30,0,.06) 13px 16px,rgba(0,0,0,0) 16px 29px);background-position:26px 0"></div><div class="a" style="left:355.00px;top:386.00px;width:48.30px;height:48.30px;background:#efdfc6;background-image:repeating-linear-gradient(88deg,rgba(150,90,40,.05) 0 2px,rgba(0,0,0,0) 2px 9px,rgba(255,255,255,.08) 9px 12px,rgba(0,0,0,0) 12px 31px);background-position:3px 0;box-shadow:inset 0 0 0 1px rgba(255,215,190,.7)"></div><div class="a" style="left:403.00px;top:386.00px;width:48.30px;height:48.30px;background:#c96b3b;background-image:repeating-linear-gradient(92deg,rgba(90,30,0,.10) 0 2px,rgba(0,0,0,0) 2px 6px,rgba(255,160,100,.07) 6px 8px,rgba(0,0,0,0) 8px 13px,rgba(90,30,0,.06) 13px 16px,rgba(0,0,0,0) 16px 29px);background-position:11px 0"></div><div class="a" style="left:67.00px;top:434.00px;width:48.30px;height:48.30px;background:#c96b3b;background-image:repeating-linear-gradient(92deg,rgba(90,30,0,.10) 0 2px,rgba(0,0,0,0) 2px 6px,rgba(255,160,100,.07) 6px 8px,rgba(0,0,0,0) 8px 13px,rgba(90,30,0,.06) 13px 16px,rgba(0,0,0,0) 16px 29px);background-position:4px 0"></div><div class="a" style="left:115.00px;top:434.00px;width:48.30px;height:48.30px;background:#efdfc6;background-image:repeating-linear-gradient(88deg,rgba(150,90,40,.05) 0 2px,rgba(0,0,0,0) 2px 9px,rgba(255,255,255,.08) 9px 12px,rgba(0,0,0,0) 12px 31px);background-position:20px 0;box-shadow:inset 0 0 0 1px rgba(255,215,190,.7)"></div><div class="a" style="left:163.00px;top:434.00px;width:48.30px;height:48.30px;background:#c96b3b;background-image:repeating-linear-gradient(92deg,rgba(90,30,0,.10) 0 2px,rgba(0,0,0,0) 2px 6px,rgba(255,160,100,.07) 6px 8px,rgba(0,0,0,0) 8px 13px,rgba(90,30,0,.06) 13px 16px,rgba(0,0,0,0) 16px 29px);background-position:18px 0"></div><div class="a" style="left:211.00px;top:434.00px;width:48.30px;height:48.30px;background:#efdfc6;background-image:repeating-linear-gradient(88deg,rgba(150,90,40,.05) 0 2px,rgba(0,0,0,0) 2px 9px,rgba(255,255,255,.08) 9px 12px,rgba(0,0,0,0) 12px 31px);background-position:30px 0;box-shadow:inset 0 0 0 1px rgba(255,215,190,.7)"></div><div class="a" style="left:259.00px;top:434.00px;width:48.30px;height:48.30px;background:#c96b3b;background-image:repeating-linear-gradient(92deg,rgba(90,30,0,.10) 0 2px,rgba(0,0,0,0) 2px 6px,rgba(255,160,100,.07) 6px 8px,rgba(0,0,0,0) 8px 13px,rgba(90,30,0,.06) 13px 16px,rgba(0,0,0,0) 16px 29px);background-position:3px 0"></div><div class="a" style="left:307.00px;top:434.00px;width:48.30px;height:48.30px;background:#efdfc6;background-image:repeating-linear-gradient(88deg,rgba(150,90,40,.05) 0 2px,rgba(0,0,0,0) 2px 9px,rgba(255,255,255,.08) 9px 12px,rgba(0,0,0,0) 12px 31px);background-position:9px 0;box-shadow:inset 0 0 0 1px rgba(255,215,190,.7)"></div><div class="a" style="left:355.00px;top:434.00px;width:48.30px;height:48.30px;background:#c96b3b;background-image:repeating-linear-gradient(92deg,rgba(90,30,0,.10) 0 2px,rgba(0,0,0,0) 2px 6px,rgba(255,160,100,.07) 6px 8px,rgba(0,0,0,0) 8px 13px,rgba(90,30,0,.06) 13px 16px,rgba(0,0,0,0) 16px 29px);background-position:17px 0"></div><div class="a" style="left:403.00px;top:434.00px;width:48.30px;height:48.30px;background:#efdfc6;background-image:repeating-linear-gradient(88deg,rgba(150,90,40,.05) 0 2px,rgba(0,0,0,0) 2px 9px,rgba(255,255,255,.08) 9px 12px,rgba(0,0,0,0) 12px 31px);background-position:19px 0;box-shadow:inset 0 0 0 1px rgba(255,215,190,.7)"></div><svg class="a" style="left:259.00px;top:98.00px" width="48.00" height="48.00" viewBox="0 0 48 48"><g fill="#151515" stroke="#151515" stroke-width="2.6" stroke-linejoin="round"><path d="M12.2,33.5C8,30 4.5,26 4.6,22.5C4.8,18.5 8,16.8 11.5,16.8C16,16.8 19.5,19.5 22,24L24,29L26,24C28.5,19.5 32,16.8 36.5,16.8C40,16.8 43.2,18.5 43.4,22.5C43.5,26 40,30 35.8,33.5Z"/><path d="M24,30C22,25 20.3,19 20.6,15.5C20.9,13.5 22.3,12.6 24,12.6C25.7,12.6 27.1,13.5 27.4,15.5C27.7,19 26,25 24,30Z"/><path d="M12,32.3C18,31 30,31 36,32.3C37,34 37,35.5 36.6,36.4C37.4,38 37.4,41 36.8,42.6C30,45 18,45 11.2,42.6C10.6,41 10.6,38 11.4,36.4C11,35.5 11,34 12,32.3Z"/></g><g fill="#1d1e24"><path d="M12.2,33.5C8,30 4.5,26 4.6,22.5C4.8,18.5 8,16.8 11.5,16.8C16,16.8 19.5,19.5 22,24L24,29L26,24C28.5,19.5 32,16.8 36.5,16.8C40,16.8 43.2,18.5 43.4,22.5C43.5,26 40,30 35.8,33.5Z"/><path d="M24,30C22,25 20.3,19 20.6,15.5C20.9,13.5 22.3,12.6 24,12.6C25.7,12.6 27.1,13.5 27.4,15.5C27.7,19 26,25 24,30Z"/><path d="M12,32.3C18,31 30,31 36,32.3C37,34 37,35.5 36.6,36.4C37.4,38 37.4,41 36.8,42.6C30,45 18,45 11.2,42.6C10.6,41 10.6,38 11.4,36.4C11,35.5 11,34 12,32.3Z"/></g><path d="M24,4.2V12M21.2,8.2H26.8" stroke="#2a1a14" stroke-width="1.3" fill="none"/><path d="M12.5,32.2C9,29.3 6.2,26 6.3,22.8C6.5,19.8 8.8,18.5 11.5,18.5C15.3,18.5 18.8,21 20.8,25.2L23,30.5M35.5,32.2C39,29.3 41.8,26 41.7,22.8C41.5,19.8 39.2,18.5 36.5,18.5C32.7,18.5 29.2,21 27.2,25.2L25,30.5" stroke="#f4f4f4" stroke-width="1" fill="none"/><path d="M24,28C22.6,24 21.9,18.5 22.1,15.8C22.3,14.6 23.1,14.1 24,14.1C24.9,14.1 25.7,14.6 25.9,15.8C26.1,18.5 25.4,24 24,28Z" fill="none" stroke="#f4f4f4" stroke-width="0.9"/><path d="M12.8,32.8C18,31.6 30,31.6 35.2,32.8M12.5,36.6C18,35.2 30,35.2 35.5,36.6M12,40.6C18,39.2 30,39.2 36,40.6" stroke="#f4f4f4" stroke-width="1.1" fill="none"/></svg><svg class="a" style="left:307.00px;top:98.00px" width="48.00" height="48.00" viewBox="0 0 48 48"><g fill="#151515" stroke="#151515" stroke-width="2.6" stroke-linejoin="round"><path d="M12.2,6.8L17.3,6.8L17.3,9.8L21.3,9.8L21.3,6.8L26.7,6.8L26.7,9.8L30.8,9.8L30.8,6.8L36.6,6.8L36.6,14.5L33,17.5L33,31L35.3,33.5L35.3,40L39.3,40L39.3,44.3L9.7,44.3L9.7,40L13.5,40L13.5,33.5L16,31L16,17.5L12.2,14.5Z"/></g><g fill="#1d1e24"><path d="M12.2,6.8L17.3,6.8L17.3,9.8L21.3,9.8L21.3,6.8L26.7,6.8L26.7,9.8L30.8,9.8L30.8,6.8L36.6,6.8L36.6,14.5L33,17.5L33,31L35.3,33.5L35.3,40L39.3,40L39.3,44.3L9.7,44.3L9.7,40L13.5,40L13.5,33.5L16,31L16,17.5L12.2,14.5Z"/></g><path d="M13.5,15H35.3M16.5,19H32.5M16.5,31.4H32.5M14.2,35.6H34.6M14.2,39H34.6" stroke="#f4f4f4" stroke-width="1.1" fill="none"/></svg><svg class="a" style="left:67.00px;top:146.00px" width="48.00" height="48.00" viewBox="0 0 48 48"><g fill="#151515" stroke="#151515" stroke-width="2.6" stroke-linejoin="round"><circle cx="24.6" cy="11.5" r="4.3"/><ellipse cx="24.8" cy="22" rx="8.4" ry="6.4"/><path d="M10.8,43.4L10.8,39C10.8,31 17,27.5 24.8,27.5C32.6,27.5 38.8,31 38.8,39L38.8,43.4Z"/></g><g fill="#1d1e24"><circle cx="24.6" cy="11.5" r="4.3"/><ellipse cx="24.8" cy="22" rx="8.4" ry="6.4"/><path d="M10.8,43.4L10.8,39C10.8,31 17,27.5 24.8,27.5C32.6,27.5 38.8,31 38.8,39L38.8,43.4Z"/></g></svg><svg class="a" style="left:115.00px;top:146.00px" width="48.00" height="48.00" viewBox="0 0 48 48"><g fill="#151515" stroke="#151515" stroke-width="2.6" stroke-linejoin="round"><circle cx="24.6" cy="11.5" r="4.3"/><ellipse cx="24.8" cy="22" rx="8.4" ry="6.4"/><path d="M10.8,43.4L10.8,39C10.8,31 17,27.5 24.8,27.5C32.6,27.5 38.8,31 38.8,39L38.8,43.4Z"/></g><g fill="#1d1e24"><circle cx="24.6" cy="11.5" r="4.3"/><ellipse cx="24.8" cy="22" rx="8.4" ry="6.4"/><path d="M10.8,43.4L10.8,39C10.8,31 17,27.5 24.8,27.5C32.6,27.5 38.8,31 38.8,39L38.8,43.4Z"/></g></svg><svg class="a" style="left:163.00px;top:146.00px" width="48.00" height="48.00" viewBox="0 0 48 48"><g fill="#151515" stroke="#151515" stroke-width="2.6" stroke-linejoin="round"><circle cx="24.6" cy="11.5" r="4.3"/><ellipse cx="24.8" cy="22" rx="8.4" ry="6.4"/><path d="M10.8,43.4L10.8,39C10.8,31 17,27.5 24.8,27.5C32.6,27.5 38.8,31 38.8,39L38.8,43.4Z"/></g><g fill="#1d1e24"><circle cx="24.6" cy="11.5" r="4.3"/><ellipse cx="24.8" cy="22" rx="8.4" ry="6.4"/><path d="M10.8,43.4L10.8,39C10.8,31 17,27.5 24.8,27.5C32.6,27.5 38.8,31 38.8,39L38.8,43.4Z"/></g></svg><svg class="a" style="left:355.00px;top:146.00px" width="48.00" height="48.00" viewBox="0 0 48 48"><g fill="#151515" stroke="#151515" stroke-width="2.6" stroke-linejoin="round"><circle cx="24.6" cy="11.5" r="4.3"/><ellipse cx="24.8" cy="22" rx="8.4" ry="6.4"/><path d="M10.8,43.4L10.8,39C10.8,31 17,27.5 24.8,27.5C32.6,27.5 38.8,31 38.8,39L38.8,43.4Z"/></g><g fill="#1d1e24"><circle cx="24.6" cy="11.5" r="4.3"/><ellipse cx="24.8" cy="22" rx="8.4" ry="6.4"/><path d="M10.8,43.4L10.8,39C10.8,31 17,27.5 24.8,27.5C32.6,27.5 38.8,31 38.8,39L38.8,43.4Z"/></g></svg><svg class="a" style="left:403.00px;top:146.00px" width="48.00" height="48.00" viewBox="0 0 48 48"><g fill="#151515" stroke="#151515" stroke-width="2.6" stroke-linejoin="round"><circle cx="24.6" cy="11.5" r="4.3"/><ellipse cx="24.8" cy="22" rx="8.4" ry="6.4"/><path d="M10.8,43.4L10.8,39C10.8,31 17,27.5 24.8,27.5C32.6,27.5 38.8,31 38.8,39L38.8,43.4Z"/></g><g fill="#1d1e24"><circle cx="24.6" cy="11.5" r="4.3"/><ellipse cx="24.8" cy="22" rx="8.4" ry="6.4"/><path d="M10.8,43.4L10.8,39C10.8,31 17,27.5 24.8,27.5C32.6,27.5 38.8,31 38.8,39L38.8,43.4Z"/></g></svg><svg class="a" style="left:259.00px;top:194.00px" width="48.00" height="48.00" viewBox="0 0 48 48"><g fill="#151515" stroke="#151515" stroke-width="2.6" stroke-linejoin="round"><circle cx="24.6" cy="11.5" r="4.3"/><ellipse cx="24.8" cy="22" rx="8.4" ry="6.4"/><path d="M10.8,43.4L10.8,39C10.8,31 17,27.5 24.8,27.5C32.6,27.5 38.8,31 38.8,39L38.8,43.4Z"/></g><g fill="url(#gw)"><circle cx="24.6" cy="11.5" r="4.3"/><ellipse cx="24.8" cy="22" rx="8.4" ry="6.4"/><path d="M10.8,43.4L10.8,39C10.8,31 17,27.5 24.8,27.5C32.6,27.5 38.8,31 38.8,39L38.8,43.4Z"/></g></svg><svg class="a" style="left:115.00px;top:242.00px" width="48.00" height="48.00" viewBox="0 0 48 48"><g fill="#151515" stroke="#151515" stroke-width="2.6" stroke-linejoin="round"><path d="M17.5,44.3L43.5,44.3C43.8,31 40.5,17.5 28.5,11.5L24,5.3L20.6,10.3L14.2,5.3L12.8,13C9.5,18 6.5,24.5 5.2,29.5C4.5,32.5 6,35.5 8.6,35.8C11.5,36.2 14.5,36 17.6,36.2C17.4,39 17.4,42 17.5,44.3Z"/></g><g fill="url(#gw)"><path d="M17.5,44.3L43.5,44.3C43.8,31 40.5,17.5 28.5,11.5L24,5.3L20.6,10.3L14.2,5.3L12.8,13C9.5,18 6.5,24.5 5.2,29.5C4.5,32.5 6,35.5 8.6,35.8C11.5,36.2 14.5,36 17.6,36.2C17.4,39 17.4,42 17.5,44.3Z"/></g><path d="M26.6,20.5C26.5,26 24,30.5 17.6,36.2" stroke="#151515" stroke-width="1.1" fill="none"/><path d="M14,19L17.5,17.2" stroke="#151515" stroke-width="1.3" fill="none"/><circle cx="8.5" cy="30.5" r=".8" fill="#151515"/><path d="M11.5,33.5C12,34.5 12.5,35 13,35.2" stroke="#151515" stroke-width=".8" fill="none"/></svg><svg class="a" style="left:211.00px;top:242.00px" width="48.00" height="48.00" viewBox="0 0 48 48"><g fill="#151515" stroke="#151515" stroke-width="2.6" stroke-linejoin="round"><circle cx="24.6" cy="11.5" r="4.3"/><ellipse cx="24.8" cy="22" rx="8.4" ry="6.4"/><path d="M10.8,43.4L10.8,39C10.8,31 17,27.5 24.8,27.5C32.6,27.5 38.8,31 38.8,39L38.8,43.4Z"/></g><g fill="#1d1e24"><circle cx="24.6" cy="11.5" r="4.3"/><ellipse cx="24.8" cy="22" rx="8.4" ry="6.4"/><path d="M10.8,43.4L10.8,39C10.8,31 17,27.5 24.8,27.5C32.6,27.5 38.8,31 38.8,39L38.8,43.4Z"/></g></svg><svg class="a" style="left:259.00px;top:242.00px" width="48.00" height="48.00" viewBox="0 0 48 48"><g fill="#151515" stroke="#151515" stroke-width="2.0" stroke-linejoin="round"><path d="M11.5,31L5.5,13.3L14.4,28L14.2,8.8L19.8,27L24,7.8L28.2,27L33.8,8.8L33.6,28L42.5,13.3L36.5,31Z"/><path d="M11.8,29.8C18,28.4 30,28.4 36.2,29.8C36.8,31 36.8,32.5 36.3,33.4C37,35 37,36.5 36.5,37.7C37.6,39 37.8,41.5 37.2,42.8C30,45 18,45 10.8,42.8C10.2,41.5 10.4,39 11.5,37.7C11,36.5 11,35 11.7,33.4C11.2,32.5 11.2,31 11.8,29.8Z"/><circle cx="5.5" cy="13.3" r="2.3"/><circle cx="14.2" cy="8.8" r="2.3"/><circle cx="24" cy="7.8" r="2.3"/><circle cx="33.8" cy="8.8" r="2.3"/><circle cx="42.5" cy="13.3" r="2.3"/></g><g fill="#1d1e24"><path d="M11.5,31L5.5,13.3L14.4,28L14.2,8.8L19.8,27L24,7.8L28.2,27L33.8,8.8L33.6,28L42.5,13.3L36.5,31Z"/><path d="M11.8,29.8C18,28.4 30,28.4 36.2,29.8C36.8,31 36.8,32.5 36.3,33.4C37,35 37,36.5 36.5,37.7C37.6,39 37.8,41.5 37.2,42.8C30,45 18,45 10.8,42.8C10.2,41.5 10.4,39 11.5,37.7C11,36.5 11,35 11.7,33.4C11.2,32.5 11.2,31 11.8,29.8Z"/><circle cx="5.5" cy="13.3" r="2.3"/><circle cx="14.2" cy="8.8" r="2.3"/><circle cx="24" cy="7.8" r="2.3"/><circle cx="33.8" cy="8.8" r="2.3"/><circle cx="42.5" cy="13.3" r="2.3"/></g><path d="M12.3,33C18,31.7 30,31.7 35.7,33M12,36.8C18,35.5 30,35.5 36,36.8M11.6,40.6C18,39.3 30,39.3 36.4,40.6" stroke="#f4f4f4" stroke-width="1.1" fill="none"/></svg><svg class="a" style="left:355.00px;top:242.00px" width="48.00" height="48.00" viewBox="0 0 48 48"><g fill="#151515" stroke="#151515" stroke-width="2.6" stroke-linejoin="round"><circle cx="24.2" cy="8.6" r="2.9"/><path d="M24.2,11.4C30,14 34.6,19 34.4,23.5C34.3,26.5 32.5,28 31,28.6L17.4,28.6C15.9,28 14.1,26.5 14,23.5C13.8,19 18.4,14 24.2,11.4Z"/><path d="M17.6,28.2L30.8,28.2C31.6,30 31.5,34 30.6,36.4L17.8,36.4C16.9,34 16.8,30 17.6,28.2Z"/><path d="M24.2,36.6C20,38.8 14,37.3 9.5,37.3C6.5,37.3 4.8,38.8 5,40.8C5.3,42.8 7.5,43.4 9.5,42.6C14,41.6 19,42 22,43.8C23,44.3 24.2,43.6 24.2,42.6C24.2,43.6 25.4,44.3 26.4,43.8C29.4,42 34.4,41.6 38.9,42.6C40.9,43.4 43.1,42.8 43.4,40.8C43.6,38.8 41.9,37.3 38.9,37.3C34.4,37.3 28.4,38.8 24.2,36.6Z"/></g><g fill="url(#gw)"><circle cx="24.2" cy="8.6" r="2.9"/><path d="M24.2,11.4C30,14 34.6,19 34.4,23.5C34.3,26.5 32.5,28 31,28.6L17.4,28.6C15.9,28 14.1,26.5 14,23.5C13.8,19 18.4,14 24.2,11.4Z"/><path d="M17.6,28.2L30.8,28.2C31.6,30 31.5,34 30.6,36.4L17.8,36.4C16.9,34 16.8,30 17.6,28.2Z"/><path d="M24.2,36.6C20,38.8 14,37.3 9.5,37.3C6.5,37.3 4.8,38.8 5,40.8C5.3,42.8 7.5,43.4 9.5,42.6C14,41.6 19,42 22,43.8C23,44.3 24.2,43.6 24.2,42.6C24.2,43.6 25.4,44.3 26.4,43.8C29.4,42 34.4,41.6 38.9,42.6C40.9,43.4 43.1,42.8 43.4,40.8C43.6,38.8 41.9,37.3 38.9,37.3C34.4,37.3 28.4,38.8 24.2,36.6Z"/></g><path d="M24.2,17.5V24.5M20.7,21H27.7" stroke="#151515" stroke-width="1.2" fill="none"/><path d="M17.6,33H30.8" stroke="#151515" stroke-width="1" fill="none"/><path d="M17.4,28.6H31M24.2,42V38" stroke="#151515" stroke-width="0.9" fill="none"/></svg><svg class="a" style="left:403.00px;top:290.00px" width="48.00" height="48.00" viewBox="0 0 48 48"><g fill="#151515" stroke="#151515" stroke-width="2.6" stroke-linejoin="round"><circle cx="24.6" cy="11.5" r="4.3"/><ellipse cx="24.8" cy="22" rx="8.4" ry="6.4"/><path d="M10.8,43.4L10.8,39C10.8,31 17,27.5 24.8,27.5C32.6,27.5 38.8,31 38.8,39L38.8,43.4Z"/></g><g fill="url(#gw)"><circle cx="24.6" cy="11.5" r="4.3"/><ellipse cx="24.8" cy="22" rx="8.4" ry="6.4"/><path d="M10.8,43.4L10.8,39C10.8,31 17,27.5 24.8,27.5C32.6,27.5 38.8,31 38.8,39L38.8,43.4Z"/></g></svg><svg class="a" style="left:67.00px;top:386.00px" width="48.00" height="48.00" viewBox="0 0 48 48"><g fill="#151515" stroke="#151515" stroke-width="2.6" stroke-linejoin="round"><circle cx="24.6" cy="11.5" r="4.3"/><ellipse cx="24.8" cy="22" rx="8.4" ry="6.4"/><path d="M10.8,43.4L10.8,39C10.8,31 17,27.5 24.8,27.5C32.6,27.5 38.8,31 38.8,39L38.8,43.4Z"/></g><g fill="url(#gw)"><circle cx="24.6" cy="11.5" r="4.3"/><ellipse cx="24.8" cy="22" rx="8.4" ry="6.4"/><path d="M10.8,43.4L10.8,39C10.8,31 17,27.5 24.8,27.5C32.6,27.5 38.8,31 38.8,39L38.8,43.4Z"/></g></svg><svg class="a" style="left:115.00px;top:386.00px" width="48.00" height="48.00" viewBox="0 0 48 48"><g fill="#151515" stroke="#151515" stroke-width="2.6" stroke-linejoin="round"><circle cx="24.6" cy="11.5" r="4.3"/><ellipse cx="24.8" cy="22" rx="8.4" ry="6.4"/><path d="M10.8,43.4L10.8,39C10.8,31 17,27.5 24.8,27.5C32.6,27.5 38.8,31 38.8,39L38.8,43.4Z"/></g><g fill="url(#gw)"><circle cx="24.6" cy="11.5" r="4.3"/><ellipse cx="24.8" cy="22" rx="8.4" ry="6.4"/><path d="M10.8,43.4L10.8,39C10.8,31 17,27.5 24.8,27.5C32.6,27.5 38.8,31 38.8,39L38.8,43.4Z"/></g></svg><svg class="a" style="left:163.00px;top:386.00px" width="48.00" height="48.00" viewBox="0 0 48 48"><g fill="#151515" stroke="#151515" stroke-width="2.6" stroke-linejoin="round"><path d="M17.5,44.3L43.5,44.3C43.8,31 40.5,17.5 28.5,11.5L24,5.3L20.6,10.3L14.2,5.3L12.8,13C9.5,18 6.5,24.5 5.2,29.5C4.5,32.5 6,35.5 8.6,35.8C11.5,36.2 14.5,36 17.6,36.2C17.4,39 17.4,42 17.5,44.3Z"/></g><g fill="#1d1e24"><path d="M17.5,44.3L43.5,44.3C43.8,31 40.5,17.5 28.5,11.5L24,5.3L20.6,10.3L14.2,5.3L12.8,13C9.5,18 6.5,24.5 5.2,29.5C4.5,32.5 6,35.5 8.6,35.8C11.5,36.2 14.5,36 17.6,36.2C17.4,39 17.4,42 17.5,44.3Z"/></g><path d="M27,11.5C38,17.5 41.2,30 41,43" stroke="#f4f4f4" stroke-width="1.1" fill="none"/><path d="M14,19L17.5,17.2" stroke="#f4f4f4" stroke-width="1.3" fill="none"/><circle cx="8.5" cy="30.5" r=".8" fill="#f4f4f4"/></svg><svg class="a" style="left:259.00px;top:386.00px" width="48.00" height="48.00" viewBox="0 0 48 48"><g fill="#151515" stroke="#151515" stroke-width="2.0" stroke-linejoin="round"><path d="M11.5,31L5.5,13.3L14.4,28L14.2,8.8L19.8,27L24,7.8L28.2,27L33.8,8.8L33.6,28L42.5,13.3L36.5,31Z"/><path d="M11.8,29.8C18,28.4 30,28.4 36.2,29.8C36.8,31 36.8,32.5 36.3,33.4C37,35 37,36.5 36.5,37.7C37.6,39 37.8,41.5 37.2,42.8C30,45 18,45 10.8,42.8C10.2,41.5 10.4,39 11.5,37.7C11,36.5 11,35 11.7,33.4C11.2,32.5 11.2,31 11.8,29.8Z"/><circle cx="5.5" cy="13.3" r="2.3"/><circle cx="14.2" cy="8.8" r="2.3"/><circle cx="24" cy="7.8" r="2.3"/><circle cx="33.8" cy="8.8" r="2.3"/><circle cx="42.5" cy="13.3" r="2.3"/></g><g fill="url(#gw)"><path d="M11.5,31L5.5,13.3L14.4,28L14.2,8.8L19.8,27L24,7.8L28.2,27L33.8,8.8L33.6,28L42.5,13.3L36.5,31Z"/><path d="M11.8,29.8C18,28.4 30,28.4 36.2,29.8C36.8,31 36.8,32.5 36.3,33.4C37,35 37,36.5 36.5,37.7C37.6,39 37.8,41.5 37.2,42.8C30,45 18,45 10.8,42.8C10.2,41.5 10.4,39 11.5,37.7C11,36.5 11,35 11.7,33.4C11.2,32.5 11.2,31 11.8,29.8Z"/><circle cx="5.5" cy="13.3" r="2.3"/><circle cx="14.2" cy="8.8" r="2.3"/><circle cx="24" cy="7.8" r="2.3"/><circle cx="33.8" cy="8.8" r="2.3"/><circle cx="42.5" cy="13.3" r="2.3"/></g><path d="M11.5,31L5.5,13.3M14.4,28L14.2,8.8M19.8,27L24,7.8M28.2,27L33.8,8.8M33.6,28L42.5,13.3M11.5,31L14.4,28M14.2,8.8L19.8,27M24,7.8L28.2,27M33.8,8.8L33.6,28M36.5,31L42.5,13.3M5.5,13.3L14.4,28M42.5,13.3L33.6,28" stroke="#151515" stroke-width="1" fill="none"/><path d="M11.7,33.4C18,32 30,32 36.3,33.4M11.5,37.7C18,36.3 30,36.3 36.5,37.7M11,41.5C18,40.2 30,40.2 37,41.5" stroke="#151515" stroke-width="1" fill="none"/><g fill="#f4f4f0"><circle cx="5.5" cy="13.3" r="1.2"/><circle cx="14.2" cy="8.8" r="1.2"/><circle cx="24" cy="7.8" r="1.2"/><circle cx="33.8" cy="8.8" r="1.2"/><circle cx="42.5" cy="13.3" r="1.2"/></g></svg><svg class="a" style="left:355.00px;top:386.00px" width="48.00" height="48.00" viewBox="0 0 48 48"><g fill="#151515" stroke="#151515" stroke-width="2.6" stroke-linejoin="round"><circle cx="24.6" cy="11.5" r="4.3"/><ellipse cx="24.8" cy="22" rx="8.4" ry="6.4"/><path d="M10.8,43.4L10.8,39C10.8,31 17,27.5 24.8,27.5C32.6,27.5 38.8,31 38.8,39L38.8,43.4Z"/></g><g fill="url(#gw)"><circle cx="24.6" cy="11.5" r="4.3"/><ellipse cx="24.8" cy="22" rx="8.4" ry="6.4"/><path d="M10.8,43.4L10.8,39C10.8,31 17,27.5 24.8,27.5C32.6,27.5 38.8,31 38.8,39L38.8,43.4Z"/></g></svg><svg class="a" style="left:67.00px;top:434.00px" width="48.00" height="48.00" viewBox="0 0 48 48"><g fill="#151515" stroke="#151515" stroke-width="2.6" stroke-linejoin="round"><path d="M12.2,6.8L17.3,6.8L17.3,9.8L21.3,9.8L21.3,6.8L26.7,6.8L26.7,9.8L30.8,9.8L30.8,6.8L36.6,6.8L36.6,14.5L33,17.5L33,31L35.3,33.5L35.3,40L39.3,40L39.3,44.3L9.7,44.3L9.7,40L13.5,40L13.5,33.5L16,31L16,17.5L12.2,14.5Z"/></g><g fill="url(#gw)"><path d="M12.2,6.8L17.3,6.8L17.3,9.8L21.3,9.8L21.3,6.8L26.7,6.8L26.7,9.8L30.8,9.8L30.8,6.8L36.6,6.8L36.6,14.5L33,17.5L33,31L35.3,33.5L35.3,40L39.3,40L39.3,44.3L9.7,44.3L9.7,40L13.5,40L13.5,33.5L16,31L16,17.5L12.2,14.5Z"/></g><path d="M12.2,14.5H36.6M16,17.5H33M16,31H33M13.5,33.5H35.3M13.5,40H35.3" stroke="#151515" stroke-width="1" fill="none"/></svg><svg class="a" style="left:259.00px;top:434.00px" width="48.00" height="48.00" viewBox="0 0 48 48"><g fill="#151515" stroke="#151515" stroke-width="2.6" stroke-linejoin="round"><circle cx="24.2" cy="8.6" r="2.9"/><path d="M24.2,11.4C30,14 34.6,19 34.4,23.5C34.3,26.5 32.5,28 31,28.6L17.4,28.6C15.9,28 14.1,26.5 14,23.5C13.8,19 18.4,14 24.2,11.4Z"/><path d="M17.6,28.2L30.8,28.2C31.6,30 31.5,34 30.6,36.4L17.8,36.4C16.9,34 16.8,30 17.6,28.2Z"/><path d="M24.2,36.6C20,38.8 14,37.3 9.5,37.3C6.5,37.3 4.8,38.8 5,40.8C5.3,42.8 7.5,43.4 9.5,42.6C14,41.6 19,42 22,43.8C23,44.3 24.2,43.6 24.2,42.6C24.2,43.6 25.4,44.3 26.4,43.8C29.4,42 34.4,41.6 38.9,42.6C40.9,43.4 43.1,42.8 43.4,40.8C43.6,38.8 41.9,37.3 38.9,37.3C34.4,37.3 28.4,38.8 24.2,36.6Z"/></g><g fill="#1d1e24"><circle cx="24.2" cy="8.6" r="2.9"/><path d="M24.2,11.4C30,14 34.6,19 34.4,23.5C34.3,26.5 32.5,28 31,28.6L17.4,28.6C15.9,28 14.1,26.5 14,23.5C13.8,19 18.4,14 24.2,11.4Z"/><path d="M17.6,28.2L30.8,28.2C31.6,30 31.5,34 30.6,36.4L17.8,36.4C16.9,34 16.8,30 17.6,28.2Z"/><path d="M24.2,36.6C20,38.8 14,37.3 9.5,37.3C6.5,37.3 4.8,38.8 5,40.8C5.3,42.8 7.5,43.4 9.5,42.6C14,41.6 19,42 22,43.8C23,44.3 24.2,43.6 24.2,42.6C24.2,43.6 25.4,44.3 26.4,43.8C29.4,42 34.4,41.6 38.9,42.6C40.9,43.4 43.1,42.8 43.4,40.8C43.6,38.8 41.9,37.3 38.9,37.3C34.4,37.3 28.4,38.8 24.2,36.6Z"/></g><path d="M24.2,17.5V24.5M20.7,21H27.7" stroke="#f4f4f4" stroke-width="1.2" fill="none"/><path d="M17.6,33H30.8" stroke="#f4f4f4" stroke-width="1" fill="none"/><path d="M18,30.8H30.4" stroke="#f4f4f4" stroke-width="0.9" fill="none"/></svg><svg class="a" style="left:403.00px;top:434.00px" width="48.00" height="48.00" viewBox="0 0 48 48"><g fill="#151515" stroke="#151515" stroke-width="2.6" stroke-linejoin="round"><path d="M12.2,33.5C8,30 4.5,26 4.6,22.5C4.8,18.5 8,16.8 11.5,16.8C16,16.8 19.5,19.5 22,24L24,29L26,24C28.5,19.5 32,16.8 36.5,16.8C40,16.8 43.2,18.5 43.4,22.5C43.5,26 40,30 35.8,33.5Z"/><path d="M24,30C22,25 20.3,19 20.6,15.5C20.9,13.5 22.3,12.6 24,12.6C25.7,12.6 27.1,13.5 27.4,15.5C27.7,19 26,25 24,30Z"/><path d="M12,32.3C18,31 30,31 36,32.3C37,34 37,35.5 36.6,36.4C37.4,38 37.4,41 36.8,42.6C30,45 18,45 11.2,42.6C10.6,41 10.6,38 11.4,36.4C11,35.5 11,34 12,32.3Z"/></g><g fill="url(#gw)"><path d="M12.2,33.5C8,30 4.5,26 4.6,22.5C4.8,18.5 8,16.8 11.5,16.8C16,16.8 19.5,19.5 22,24L24,29L26,24C28.5,19.5 32,16.8 36.5,16.8C40,16.8 43.2,18.5 43.4,22.5C43.5,26 40,30 35.8,33.5Z"/><path d="M24,30C22,25 20.3,19 20.6,15.5C20.9,13.5 22.3,12.6 24,12.6C25.7,12.6 27.1,13.5 27.4,15.5C27.7,19 26,25 24,30Z"/><path d="M12,32.3C18,31 30,31 36,32.3C37,34 37,35.5 36.6,36.4C37.4,38 37.4,41 36.8,42.6C30,45 18,45 11.2,42.6C10.6,41 10.6,38 11.4,36.4C11,35.5 11,34 12,32.3Z"/></g><g fill="none" stroke="#151515" stroke-width="1.1"><path d="M12.2,33.5C8,30 4.5,26 4.6,22.5C4.8,18.5 8,16.8 11.5,16.8C16,16.8 19.5,19.5 22,24L24,29L26,24C28.5,19.5 32,16.8 36.5,16.8C40,16.8 43.2,18.5 43.4,22.5C43.5,26 40,30 35.8,33.5"/><path d="M24,30C22,25 20.3,19 20.6,15.5C20.9,13.5 22.3,12.6 24,12.6C25.7,12.6 27.1,13.5 27.4,15.5C27.7,19 26,25 24,30Z"/><path d="M12,32.3C18,31 30,31 36,32.3"/></g><path d="M24,4.2V12M21.2,8.2H26.8" stroke="#2a1a14" stroke-width="1.3" fill="none"/><path d="M12,36.3C18,34.8 30,34.8 36,36.3M11.8,40.5C18,39 30,39 36.2,40.5" stroke="#151515" stroke-width="1.1" fill="none"/></svg><div class="a" style="left:427px;top:334px;width:2.2px;height:77px;background:#f0dc30;box-shadow:0 0 1px #c09010"></div><div class="a" style="left:424px;top:329px;width:0;height:0;border-bottom:6px solid #f0dc30;border-left:4px solid transparent;border-right:4px solid transparent"></div><div class="a lbl" style="left:67px;top:483px">a</div><div class="a lbl" style="left:115px;top:483px">b</div><div class="a lbl" style="left:163px;top:483px">c</div><div class="a lbl" style="left:211px;top:483px">d</div><div class="a lbl" style="left:259px;top:483px">e</div><div class="a lbl" style="left:307px;top:483px">f</div><div class="a lbl" style="left:355px;top:483px">g</div><div class="a lbl" style="left:403px;top:483px">h</div><div class="a rk" style="left:54.5px;top:115px">8</div><div class="a rk" style="left:54.5px;top:163px">7</div><div class="a rk" style="left:54.5px;top:211px">6</div><div class="a rk" style="left:54.5px;top:259px">5</div><div class="a rk" style="left:54.5px;top:307px">4</div><div class="a rk" style="left:54.5px;top:355px">3</div><div class="a rk" style="left:54.5px;top:403px">2</div><div class="a rk" style="left:54.5px;top:451px">1</div><div class="a" style="left:56px;top:485px;width:8px;height:12px;background:linear-gradient(#6a7a3a 0 1px,transparent 1px 4px,#2a8a2a 4px 5.5px,transparent 5.5px 7.5px,#7a6a3a 7.5px 8.5px,transparent 8.5px 10.5px,#7a3a2a 10.5px 11.5px,transparent 11.5px)"></div><div class="a" style="left:454px;top:485px;width:8px;height:8px;border-radius:50%;background:#1a2a2a;border:1.5px solid #6a6a6a"></div><div class="a" style="left:219px;top:507px;width:88px;height:19px;background:#d8d8d8;border:1px solid #bbb"></div><div class="a" style="left:220.0px;top:508px;width:16.4px;height:17px;background:linear-gradient(#f0f0f0,#d8d8d8);border-right:1px solid #c4c4c4"></div><svg class="a" style="left:220.0px;top:508.5px" width="16" height="16" viewBox="0 0 16 16"><rect x="3" y="4" width="1.6" height="8" fill="#3cb44a"/><path d="M4.5,8L9,4V6.5H14V9.5H9V12Z" fill="#3cb44a"/></svg><div class="a" style="left:237.4px;top:508px;width:16.4px;height:17px;background:linear-gradient(#f0f0f0,#d8d8d8);border-right:1px solid #c4c4c4"></div><svg class="a" style="left:237.4px;top:508.5px" width="16" height="16" viewBox="0 0 16 16"><path d="M3,8L8,4V6.5H14V9.5H8V12Z" fill="#3cb44a"/></svg><div class="a" style="left:254.8px;top:508px;width:16.4px;height:17px;background:linear-gradient(#f0f0f0,#d8d8d8);border-right:1px solid #c4c4c4"></div><svg class="a" style="left:254.8px;top:508.5px" width="16" height="16" viewBox="0 0 16 16"><path d="M3,9L6,5.5L6.8,7.3C10,6.3 13,7.5 14,11C12,9.3 9.5,9 7.5,9.6L8.3,11.3Z" fill="#4a90d8"/></svg><div class="a" style="left:272.2px;top:508px;width:16.4px;height:17px;background:linear-gradient(#f0f0f0,#d8d8d8);border-right:1px solid #c4c4c4"></div><svg class="a" style="left:272.2px;top:508.5px" width="16" height="16" viewBox="0 0 16 16"><path d="M13,8L8,4V6.5H2V9.5H8V12Z" fill="#3cb44a"/></svg><div class="a" style="left:289.6px;top:508px;width:16.4px;height:17px;background:linear-gradient(#f0f0f0,#d8d8d8);border-right:1px solid #c4c4c4"></div><svg class="a" style="left:289.6px;top:508.5px" width="16" height="16" viewBox="0 0 16 16"><rect x="11.4" y="4" width="1.6" height="8" fill="#3cb44a"/><path d="M11.5,8L7,4V6.5H2V9.5H7V12Z" fill="#3cb44a"/></svg><div class="a" style="left:519px;top:72px;width:481px;height:457px;background:#e2e2e2"></div><div class="a" style="left:519px;top:72px;width:3px;height:457px;background:#f4f4f4"></div><div class="a" style="left:522px;top:72.5px;width:478px;height:11.5px;background:linear-gradient(#d8dde4,#c6ccd4)"></div><div class="a t " style="left:525px;top:78.3px;font-size:6.4px;color:#303030;letter-spacing:-0.05px;-webkit-text-stroke:0.1px #303030">Notation + Openings Book</div><div class="a" style="left:983.5px;top:77px;width:0;height:0;border-top:3px solid #222;border-left:2.5px solid transparent;border-right:2.5px solid transparent"></div><div class="a t " style="left:992px;top:78px;font-size:6.5px;color:#222;font-weight:bold">&#x2715;</div><div class="a" style="left:522px;top:84px;width:478px;height:12px;background:#6c6c6c"></div><div class="a" style="left:523.5px;top:85px;width:30.5px;height:11.5px;background:#3a4250"></div><div class="a t " style="left:527px;top:90.5px;font-size:6.4px;color:#3a9ad8;letter-spacing:-0.15px">Notation</div><div class="a t " style="left:558px;top:90.5px;font-size:6.4px;color:#e8e8e8;letter-spacing:-0.12px">Reference</div><div class="a t " style="left:591px;top:90.5px;font-size:6.4px;color:#e8e8e8;letter-spacing:-0.12px">Replay training</div><div class="a t " style="left:638px;top:90.5px;font-size:6.4px;color:#e8e8e8;letter-spacing:-0.12px">Table</div><div class="a t " style="left:664px;top:90.5px;font-size:6.4px;color:#e8e8e8;letter-spacing:-0.12px">Plan Explorer</div><div class="a t " style="left:705px;top:90.5px;font-size:6.4px;color:#e8e8e8;letter-spacing:-0.12px">Score sheet</div><div class="a t " style="left:743px;top:90.5px;font-size:6.4px;color:#e8e8e8;letter-spacing:-0.12px">LiveBook</div><div class="a t " style="left:774px;top:90.5px;font-size:6.4px;color:#e8e8e8;letter-spacing:-0.12px">Openings Book</div><div class="a t " style="left:823px;top:90.5px;font-size:6.4px;color:#e8e8e8;letter-spacing:-0.12px">My Moves</div><div class="a t " style="left:857px;top:90.5px;font-size:6.4px;color:#e8e8e8;letter-spacing:-0.12px">Surveys</div><div class="a" style="left:522px;top:96px;width:478px;height:41px;background:#e4e4e4"></div><div class="a" style="left:522px;top:136px;width:478px;height:1.5px;background:#b8b8c8"></div><svg class="a" style="left:651px;top:98px" width="26" height="37" viewBox="0 0 26 37"><defs><radialGradient id="fc" cx="0.5" cy="0.35" r="0.6"><stop offset="0" stop-color="#d8d8d8"/><stop offset="0.6" stop-color="#b4b4b4"/><stop offset="1" stop-color="#707070"/></radialGradient></defs><rect width="26" height="37" fill="#dcdcdc"/><path d="M20,0H26V37H22z" fill="#c8c8c8"/><ellipse cx="12.5" cy="14" rx="9.5" ry="12.5" fill="url(#fc)"/><path d="M3,9Q2,18 6,24L6.5,13z" fill="#5a5a5a"/><path d="M22,9Q23,18 19,24L18.5,13z" fill="#6a6a6a"/><path d="M6.5,14.5Q9,13 11.5,14.5M14,14.5Q16.5,13 19,14.5" stroke="#2a2a2a" stroke-width="1.2" fill="none"/><path d="M7.5,16.5h3M14.5,16.5h3" stroke="#505050" stroke-width=".9"/><path d="M12.5,16L11.5,21L13.8,21.3" stroke="#606060" stroke-width=".8" fill="none"/><path d="M9.5,23.5Q12.5,25 15.5,23.5" stroke="#3a3a3a" stroke-width="1" fill="none"/><path d="M0,37V31Q3,27.5 8,26.5L11.5,37z" fill="#2a2a2a"/><path d="M26,37V31Q22,27.5 17.5,26.5L14,37z" fill="#333"/><path d="M8,26.5L12.8,28.5L17.5,26.5L14.5,37H11.5z" fill="#f0f0f0"/><path d="M11.3,28.8H14.3L15,31.5L12.8,35L10.8,31.5z" fill="#1e1e1e"/></svg><div class="a" style="left:683px;top:98.5px;width:13px;height:10px;background:linear-gradient(#c84a56 0 38%,#f6f0ea 38% 60%,#b01020 60%)"></div><div class="a t " style="left:702px;top:103px;font-size:8px;color:#3a3a3a;letter-spacing:0px"><b>Tal,Mihail</b> 2630 - <b>Miller,Jack</b>  <b>1-0</b></div><div class="a t " style="left:713px;top:116px;font-size:8px;color:#3a3a3a;letter-spacing:0px"><b>C56</b> Los Angeles sim  1988</div><div class="a t " style="left:729px;top:129px;font-size:8px;color:#3a3a3a;letter-spacing:0px"><i>[Nagesh,Havanur]</i></div><div class="a" style="left:522px;top:137.5px;width:447px;height:327px;overflow:hidden"><div class="a" style="left:7px;top:-70.125px;width:115.0px;height:115.0px;background:#6a5548"></div><div class="a" style="left:8.00px;top:1.50px;width:14.43px;height:14.43px;background:#c6663a"></div><div class="a" style="left:22.12px;top:1.50px;width:14.43px;height:14.43px;background:#f0dfc2"></div><div class="a" style="left:36.25px;top:1.50px;width:14.43px;height:14.43px;background:#c6663a"></div><div class="a" style="left:50.38px;top:1.50px;width:14.43px;height:14.43px;background:#f0dfc2"></div><div class="a" style="left:64.50px;top:1.50px;width:14.43px;height:14.43px;background:#c6663a"></div><div class="a" style="left:78.62px;top:1.50px;width:14.43px;height:14.43px;background:#f0dfc2"></div><div class="a" style="left:92.75px;top:1.50px;width:14.43px;height:14.43px;background:#c6663a"></div><div class="a" style="left:106.88px;top:1.50px;width:14.43px;height:14.43px;background:#f0dfc2"></div><div class="a" style="left:8.00px;top:15.62px;width:14.43px;height:14.43px;background:#f0dfc2"></div><div class="a" style="left:22.12px;top:15.62px;width:14.43px;height:14.43px;background:#c6663a"></div><div class="a" style="left:36.25px;top:15.62px;width:14.43px;height:14.43px;background:#f0dfc2"></div><div class="a" style="left:50.38px;top:15.62px;width:14.43px;height:14.43px;background:#c6663a"></div><div class="a" style="left:64.50px;top:15.62px;width:14.43px;height:14.43px;background:#f0dfc2"></div><div class="a" style="left:78.62px;top:15.62px;width:14.43px;height:14.43px;background:#c6663a"></div><div class="a" style="left:92.75px;top:15.62px;width:14.43px;height:14.43px;background:#f0dfc2"></div><div class="a" style="left:106.88px;top:15.62px;width:14.43px;height:14.43px;background:#c6663a"></div><div class="a" style="left:8.00px;top:29.75px;width:14.43px;height:14.43px;background:#c6663a"></div><div class="a" style="left:22.12px;top:29.75px;width:14.43px;height:14.43px;background:#f0dfc2"></div><div class="a" style="left:36.25px;top:29.75px;width:14.43px;height:14.43px;background:#c6663a"></div><div class="a" style="left:50.38px;top:29.75px;width:14.43px;height:14.43px;background:#f0dfc2"></div><div class="a" style="left:64.50px;top:29.75px;width:14.43px;height:14.43px;background:#c6663a"></div><div class="a" style="left:78.62px;top:29.75px;width:14.43px;height:14.43px;background:#f0dfc2"></div><div class="a" style="left:92.75px;top:29.75px;width:14.43px;height:14.43px;background:#c6663a"></div><div class="a" style="left:106.88px;top:29.75px;width:14.43px;height:14.43px;background:#f0dfc2"></div><svg class="a" style="left:7.65px;top:15.27px" width="14.83" height="14.83" viewBox="0 0 48 48"><g fill="#151515" stroke="#151515" stroke-width="2.6" stroke-linejoin="round"><circle cx="24.6" cy="11.5" r="4.3"/><ellipse cx="24.8" cy="22" rx="8.4" ry="6.4"/><path d="M10.8,43.4L10.8,39C10.8,31 17,27.5 24.8,27.5C32.6,27.5 38.8,31 38.8,39L38.8,43.4Z"/></g><g fill="url(#gw)"><circle cx="24.6" cy="11.5" r="4.3"/><ellipse cx="24.8" cy="22" rx="8.4" ry="6.4"/><path d="M10.8,43.4L10.8,39C10.8,31 17,27.5 24.8,27.5C32.6,27.5 38.8,31 38.8,39L38.8,43.4Z"/></g></svg><svg class="a" style="left:21.77px;top:15.27px" width="14.83" height="14.83" viewBox="0 0 48 48"><g fill="#151515" stroke="#151515" stroke-width="2.6" stroke-linejoin="round"><circle cx="24.6" cy="11.5" r="4.3"/><ellipse cx="24.8" cy="22" rx="8.4" ry="6.4"/><path d="M10.8,43.4L10.8,39C10.8,31 17,27.5 24.8,27.5C32.6,27.5 38.8,31 38.8,39L38.8,43.4Z"/></g><g fill="url(#gw)"><circle cx="24.6" cy="11.5" r="4.3"/><ellipse cx="24.8" cy="22" rx="8.4" ry="6.4"/><path d="M10.8,43.4L10.8,39C10.8,31 17,27.5 24.8,27.5C32.6,27.5 38.8,31 38.8,39L38.8,43.4Z"/></g></svg><svg class="a" style="left:35.90px;top:15.27px" width="14.83" height="14.83" viewBox="0 0 48 48"><g fill="#151515" stroke="#151515" stroke-width="2.6" stroke-linejoin="round"><path d="M17.5,44.3L43.5,44.3C43.8,31 40.5,17.5 28.5,11.5L24,5.3L20.6,10.3L14.2,5.3L12.8,13C9.5,18 6.5,24.5 5.2,29.5C4.5,32.5 6,35.5 8.6,35.8C11.5,36.2 14.5,36 17.6,36.2C17.4,39 17.4,42 17.5,44.3Z"/></g><g fill="#1d1e24"><path d="M17.5,44.3L43.5,44.3C43.8,31 40.5,17.5 28.5,11.5L24,5.3L20.6,10.3L14.2,5.3L12.8,13C9.5,18 6.5,24.5 5.2,29.5C4.5,32.5 6,35.5 8.6,35.8C11.5,36.2 14.5,36 17.6,36.2C17.4,39 17.4,42 17.5,44.3Z"/></g><path d="M27,11.5C38,17.5 41.2,30 41,43" stroke="#f4f4f4" stroke-width="1.1" fill="none"/><path d="M14,19L17.5,17.2" stroke="#f4f4f4" stroke-width="1.3" fill="none"/><circle cx="8.5" cy="30.5" r=".8" fill="#f4f4f4"/></svg><svg class="a" style="left:64.15px;top:15.27px" width="14.83" height="14.83" viewBox="0 0 48 48"><g fill="#151515" stroke="#151515" stroke-width="2.0" stroke-linejoin="round"><path d="M11.5,31L5.5,13.3L14.4,28L14.2,8.8L19.8,27L24,7.8L28.2,27L33.8,8.8L33.6,28L42.5,13.3L36.5,31Z"/><path d="M11.8,29.8C18,28.4 30,28.4 36.2,29.8C36.8,31 36.8,32.5 36.3,33.4C37,35 37,36.5 36.5,37.7C37.6,39 37.8,41.5 37.2,42.8C30,45 18,45 10.8,42.8C10.2,41.5 10.4,39 11.5,37.7C11,36.5 11,35 11.7,33.4C11.2,32.5 11.2,31 11.8,29.8Z"/><circle cx="5.5" cy="13.3" r="2.3"/><circle cx="14.2" cy="8.8" r="2.3"/><circle cx="24" cy="7.8" r="2.3"/><circle cx="33.8" cy="8.8" r="2.3"/><circle cx="42.5" cy="13.3" r="2.3"/></g><g fill="url(#gw)"><path d="M11.5,31L5.5,13.3L14.4,28L14.2,8.8L19.8,27L24,7.8L28.2,27L33.8,8.8L33.6,28L42.5,13.3L36.5,31Z"/><path d="M11.8,29.8C18,28.4 30,28.4 36.2,29.8C36.8,31 36.8,32.5 36.3,33.4C37,35 37,36.5 36.5,37.7C37.6,39 37.8,41.5 37.2,42.8C30,45 18,45 10.8,42.8C10.2,41.5 10.4,39 11.5,37.7C11,36.5 11,35 11.7,33.4C11.2,32.5 11.2,31 11.8,29.8Z"/><circle cx="5.5" cy="13.3" r="2.3"/><circle cx="14.2" cy="8.8" r="2.3"/><circle cx="24" cy="7.8" r="2.3"/><circle cx="33.8" cy="8.8" r="2.3"/><circle cx="42.5" cy="13.3" r="2.3"/></g><path d="M11.5,31L5.5,13.3M14.4,28L14.2,8.8M19.8,27L24,7.8M28.2,27L33.8,8.8M33.6,28L42.5,13.3M11.5,31L14.4,28M14.2,8.8L19.8,27M24,7.8L28.2,27M33.8,8.8L33.6,28M36.5,31L42.5,13.3M5.5,13.3L14.4,28M42.5,13.3L33.6,28" stroke="#151515" stroke-width="1" fill="none"/><path d="M11.7,33.4C18,32 30,32 36.3,33.4M11.5,37.7C18,36.3 30,36.3 36.5,37.7M11,41.5C18,40.2 30,40.2 37,41.5" stroke="#151515" stroke-width="1" fill="none"/><g fill="#f4f4f0"><circle cx="5.5" cy="13.3" r="1.2"/><circle cx="14.2" cy="8.8" r="1.2"/><circle cx="24" cy="7.8" r="1.2"/><circle cx="33.8" cy="8.8" r="1.2"/><circle cx="42.5" cy="13.3" r="1.2"/></g></svg><svg class="a" style="left:92.40px;top:15.27px" width="14.83" height="14.83" viewBox="0 0 48 48"><g fill="#151515" stroke="#151515" stroke-width="2.6" stroke-linejoin="round"><circle cx="24.6" cy="11.5" r="4.3"/><ellipse cx="24.8" cy="22" rx="8.4" ry="6.4"/><path d="M10.8,43.4L10.8,39C10.8,31 17,27.5 24.8,27.5C32.6,27.5 38.8,31 38.8,39L38.8,43.4Z"/></g><g fill="url(#gw)"><circle cx="24.6" cy="11.5" r="4.3"/><ellipse cx="24.8" cy="22" rx="8.4" ry="6.4"/><path d="M10.8,43.4L10.8,39C10.8,31 17,27.5 24.8,27.5C32.6,27.5 38.8,31 38.8,39L38.8,43.4Z"/></g></svg><svg class="a" style="left:106.52px;top:15.27px" width="14.83" height="14.83" viewBox="0 0 48 48"><g fill="#151515" stroke="#151515" stroke-width="2.6" stroke-linejoin="round"><circle cx="24.6" cy="11.5" r="4.3"/><ellipse cx="24.8" cy="22" rx="8.4" ry="6.4"/><path d="M10.8,43.4L10.8,39C10.8,31 17,27.5 24.8,27.5C32.6,27.5 38.8,31 38.8,39L38.8,43.4Z"/></g><g fill="url(#gw)"><circle cx="24.6" cy="11.5" r="4.3"/><ellipse cx="24.8" cy="22" rx="8.4" ry="6.4"/><path d="M10.8,43.4L10.8,39C10.8,31 17,27.5 24.8,27.5C32.6,27.5 38.8,31 38.8,39L38.8,43.4Z"/></g></svg><svg class="a" style="left:7.65px;top:29.40px" width="14.83" height="14.83" viewBox="0 0 48 48"><g fill="#151515" stroke="#151515" stroke-width="2.6" stroke-linejoin="round"><path d="M12.2,6.8L17.3,6.8L17.3,9.8L21.3,9.8L21.3,6.8L26.7,6.8L26.7,9.8L30.8,9.8L30.8,6.8L36.6,6.8L36.6,14.5L33,17.5L33,31L35.3,33.5L35.3,40L39.3,40L39.3,44.3L9.7,44.3L9.7,40L13.5,40L13.5,33.5L16,31L16,17.5L12.2,14.5Z"/></g><g fill="url(#gw)"><path d="M12.2,6.8L17.3,6.8L17.3,9.8L21.3,9.8L21.3,6.8L26.7,6.8L26.7,9.8L30.8,9.8L30.8,6.8L36.6,6.8L36.6,14.5L33,17.5L33,31L35.3,33.5L35.3,40L39.3,40L39.3,44.3L9.7,44.3L9.7,40L13.5,40L13.5,33.5L16,31L16,17.5L12.2,14.5Z"/></g><path d="M12.2,14.5H36.6M16,17.5H33M16,31H33M13.5,33.5H35.3M13.5,40H35.3" stroke="#151515" stroke-width="1" fill="none"/></svg><svg class="a" style="left:64.15px;top:29.40px" width="14.83" height="14.83" viewBox="0 0 48 48"><g fill="#151515" stroke="#151515" stroke-width="2.6" stroke-linejoin="round"><circle cx="24.2" cy="8.6" r="2.9"/><path d="M24.2,11.4C30,14 34.6,19 34.4,23.5C34.3,26.5 32.5,28 31,28.6L17.4,28.6C15.9,28 14.1,26.5 14,23.5C13.8,19 18.4,14 24.2,11.4Z"/><path d="M17.6,28.2L30.8,28.2C31.6,30 31.5,34 30.6,36.4L17.8,36.4C16.9,34 16.8,30 17.6,28.2Z"/><path d="M24.2,36.6C20,38.8 14,37.3 9.5,37.3C6.5,37.3 4.8,38.8 5,40.8C5.3,42.8 7.5,43.4 9.5,42.6C14,41.6 19,42 22,43.8C23,44.3 24.2,43.6 24.2,42.6C24.2,43.6 25.4,44.3 26.4,43.8C29.4,42 34.4,41.6 38.9,42.6C40.9,43.4 43.1,42.8 43.4,40.8C43.6,38.8 41.9,37.3 38.9,37.3C34.4,37.3 28.4,38.8 24.2,36.6Z"/></g><g fill="#1d1e24"><circle cx="24.2" cy="8.6" r="2.9"/><path d="M24.2,11.4C30,14 34.6,19 34.4,23.5C34.3,26.5 32.5,28 31,28.6L17.4,28.6C15.9,28 14.1,26.5 14,23.5C13.8,19 18.4,14 24.2,11.4Z"/><path d="M17.6,28.2L30.8,28.2C31.6,30 31.5,34 30.6,36.4L17.8,36.4C16.9,34 16.8,30 17.6,28.2Z"/><path d="M24.2,36.6C20,38.8 14,37.3 9.5,37.3C6.5,37.3 4.8,38.8 5,40.8C5.3,42.8 7.5,43.4 9.5,42.6C14,41.6 19,42 22,43.8C23,44.3 24.2,43.6 24.2,42.6C24.2,43.6 25.4,44.3 26.4,43.8C29.4,42 34.4,41.6 38.9,42.6C40.9,43.4 43.1,42.8 43.4,40.8C43.6,38.8 41.9,37.3 38.9,37.3C34.4,37.3 28.4,38.8 24.2,36.6Z"/></g><path d="M24.2,17.5V24.5M20.7,21H27.7" stroke="#f4f4f4" stroke-width="1.2" fill="none"/><path d="M17.6,33H30.8" stroke="#f4f4f4" stroke-width="1" fill="none"/><path d="M18,30.8H30.4" stroke="#f4f4f4" stroke-width="0.9" fill="none"/></svg><svg class="a" style="left:106.52px;top:29.40px" width="14.83" height="14.83" viewBox="0 0 48 48"><g fill="#151515" stroke="#151515" stroke-width="2.6" stroke-linejoin="round"><path d="M12.2,33.5C8,30 4.5,26 4.6,22.5C4.8,18.5 8,16.8 11.5,16.8C16,16.8 19.5,19.5 22,24L24,29L26,24C28.5,19.5 32,16.8 36.5,16.8C40,16.8 43.2,18.5 43.4,22.5C43.5,26 40,30 35.8,33.5Z"/><path d="M24,30C22,25 20.3,19 20.6,15.5C20.9,13.5 22.3,12.6 24,12.6C25.7,12.6 27.1,13.5 27.4,15.5C27.7,19 26,25 24,30Z"/><path d="M12,32.3C18,31 30,31 36,32.3C37,34 37,35.5 36.6,36.4C37.4,38 37.4,41 36.8,42.6C30,45 18,45 11.2,42.6C10.6,41 10.6,38 11.4,36.4C11,35.5 11,34 12,32.3Z"/></g><g fill="url(#gw)"><path d="M12.2,33.5C8,30 4.5,26 4.6,22.5C4.8,18.5 8,16.8 11.5,16.8C16,16.8 19.5,19.5 22,24L24,29L26,24C28.5,19.5 32,16.8 36.5,16.8C40,16.8 43.2,18.5 43.4,22.5C43.5,26 40,30 35.8,33.5Z"/><path d="M24,30C22,25 20.3,19 20.6,15.5C20.9,13.5 22.3,12.6 24,12.6C25.7,12.6 27.1,13.5 27.4,15.5C27.7,19 26,25 24,30Z"/><path d="M12,32.3C18,31 30,31 36,32.3C37,34 37,35.5 36.6,36.4C37.4,38 37.4,41 36.8,42.6C30,45 18,45 11.2,42.6C10.6,41 10.6,38 11.4,36.4C11,35.5 11,34 12,32.3Z"/></g><g fill="none" stroke="#151515" stroke-width="1.1"><path d="M12.2,33.5C8,30 4.5,26 4.6,22.5C4.8,18.5 8,16.8 11.5,16.8C16,16.8 19.5,19.5 22,24L24,29L26,24C28.5,19.5 32,16.8 36.5,16.8C40,16.8 43.2,18.5 43.4,22.5C43.5,26 40,30 35.8,33.5"/><path d="M24,30C22,25 20.3,19 20.6,15.5C20.9,13.5 22.3,12.6 24,12.6C25.7,12.6 27.1,13.5 27.4,15.5C27.7,19 26,25 24,30Z"/><path d="M12,32.3C18,31 30,31 36,32.3"/></g><path d="M24,4.2V12M21.2,8.2H26.8" stroke="#2a1a14" stroke-width="1.3" fill="none"/><path d="M12,36.3C18,34.8 30,34.8 36,36.3M11.8,40.5C18,39 30,39 36.2,40.5" stroke="#151515" stroke-width="1.1" fill="none"/></svg><div class="a" style="left:7px;top:113.5px;width:115.0px;height:115.0px;background:#6a5548"></div><div class="a" style="left:8.00px;top:114.50px;width:14.43px;height:14.43px;background:#f0dfc2"></div><div class="a" style="left:22.12px;top:114.50px;width:14.43px;height:14.43px;background:#c6663a"></div><div class="a" style="left:36.25px;top:114.50px;width:14.43px;height:14.43px;background:#f0dfc2"></div><div class="a" style="left:50.38px;top:114.50px;width:14.43px;height:14.43px;background:#c6663a"></div><div class="a" style="left:64.50px;top:114.50px;width:14.43px;height:14.43px;background:#f0dfc2"></div><div class="a" style="left:78.62px;top:114.50px;width:14.43px;height:14.43px;background:#c6663a"></div><div class="a" style="left:92.75px;top:114.50px;width:14.43px;height:14.43px;background:#f0dfc2"></div><div class="a" style="left:106.88px;top:114.50px;width:14.43px;height:14.43px;background:#c6663a"></div><div class="a" style="left:8.00px;top:128.62px;width:14.43px;height:14.43px;background:#c6663a"></div><div class="a" style="left:22.12px;top:128.62px;width:14.43px;height:14.43px;background:#f0dfc2"></div><div class="a" style="left:36.25px;top:128.62px;width:14.43px;height:14.43px;background:#c6663a"></div><div class="a" style="left:50.38px;top:128.62px;width:14.43px;height:14.43px;background:#f0dfc2"></div><div class="a" style="left:64.50px;top:128.62px;width:14.43px;height:14.43px;background:#c6663a"></div><div class="a" style="left:78.62px;top:128.62px;width:14.43px;height:14.43px;background:#f0dfc2"></div><div class="a" style="left:92.75px;top:128.62px;width:14.43px;height:14.43px;background:#c6663a"></div><div class="a" style="left:106.88px;top:128.62px;width:14.43px;height:14.43px;background:#f0dfc2"></div><div class="a" style="left:8.00px;top:142.75px;width:14.43px;height:14.43px;background:#f0dfc2"></div><div class="a" style="left:22.12px;top:142.75px;width:14.43px;height:14.43px;background:#c6663a"></div><div class="a" style="left:36.25px;top:142.75px;width:14.43px;height:14.43px;background:#f0dfc2"></div><div class="a" style="left:50.38px;top:142.75px;width:14.43px;height:14.43px;background:#c6663a"></div><div class="a" style="left:64.50px;top:142.75px;width:14.43px;height:14.43px;background:#f0dfc2"></div><div class="a" style="left:78.62px;top:142.75px;width:14.43px;height:14.43px;background:#c6663a"></div><div class="a" style="left:92.75px;top:142.75px;width:14.43px;height:14.43px;background:#f0dfc2"></div><div class="a" style="left:106.88px;top:142.75px;width:14.43px;height:14.43px;background:#c6663a"></div><div class="a" style="left:8.00px;top:156.88px;width:14.43px;height:14.43px;background:#c6663a"></div><div class="a" style="left:22.12px;top:156.88px;width:14.43px;height:14.43px;background:#f0dfc2"></div><div class="a" style="left:36.25px;top:156.88px;width:14.43px;height:14.43px;background:#c6663a"></div><div class="a" style="left:50.38px;top:156.88px;width:14.43px;height:14.43px;background:#f0dfc2"></div><div class="a" style="left:64.50px;top:156.88px;width:14.43px;height:14.43px;background:#c6663a"></div><div class="a" style="left:78.62px;top:156.88px;width:14.43px;height:14.43px;background:#f0dfc2"></div><div class="a" style="left:92.75px;top:156.88px;width:14.43px;height:14.43px;background:#c6663a"></div><div class="a" style="left:106.88px;top:156.88px;width:14.43px;height:14.43px;background:#f0dfc2"></div><div class="a" style="left:8.00px;top:171.00px;width:14.43px;height:14.43px;background:#f0dfc2"></div><div class="a" style="left:22.12px;top:171.00px;width:14.43px;height:14.43px;background:#c6663a"></div><div class="a" style="left:36.25px;top:171.00px;width:14.43px;height:14.43px;background:#f0dfc2"></div><div class="a" style="left:50.38px;top:171.00px;width:14.43px;height:14.43px;background:#c6663a"></div><div class="a" style="left:64.50px;top:171.00px;width:14.43px;height:14.43px;background:#f0dfc2"></div><div class="a" style="left:78.62px;top:171.00px;width:14.43px;height:14.43px;background:#c6663a"></div><div class="a" style="left:92.75px;top:171.00px;width:14.43px;height:14.43px;background:#f0dfc2"></div><div class="a" style="left:106.88px;top:171.00px;width:14.43px;height:14.43px;background:#c6663a"></div><div class="a" style="left:8.00px;top:185.12px;width:14.43px;height:14.43px;background:#c6663a"></div><div class="a" style="left:22.12px;top:185.12px;width:14.43px;height:14.43px;background:#f0dfc2"></div><div class="a" style="left:36.25px;top:185.12px;width:14.43px;height:14.43px;background:#c6663a"></div><div class="a" style="left:50.38px;top:185.12px;width:14.43px;height:14.43px;background:#f0dfc2"></div><div class="a" style="left:64.50px;top:185.12px;width:14.43px;height:14.43px;background:#c6663a"></div><div class="a" style="left:78.62px;top:185.12px;width:14.43px;height:14.43px;background:#f0dfc2"></div><div class="a" style="left:92.75px;top:185.12px;width:14.43px;height:14.43px;background:#c6663a"></div><div class="a" style="left:106.88px;top:185.12px;width:14.43px;height:14.43px;background:#f0dfc2"></div><div class="a" style="left:8.00px;top:199.25px;width:14.43px;height:14.43px;background:#f0dfc2"></div><div class="a" style="left:22.12px;top:199.25px;width:14.43px;height:14.43px;background:#c6663a"></div><div class="a" style="left:36.25px;top:199.25px;width:14.43px;height:14.43px;background:#f0dfc2"></div><div class="a" style="left:50.38px;top:199.25px;width:14.43px;height:14.43px;background:#c6663a"></div><div class="a" style="left:64.50px;top:199.25px;width:14.43px;height:14.43px;background:#f0dfc2"></div><div class="a" style="left:78.62px;top:199.25px;width:14.43px;height:14.43px;background:#c6663a"></div><div class="a" style="left:92.75px;top:199.25px;width:14.43px;height:14.43px;background:#f0dfc2"></div><div class="a" style="left:106.88px;top:199.25px;width:14.43px;height:14.43px;background:#c6663a"></div><div class="a" style="left:8.00px;top:213.38px;width:14.43px;height:14.43px;background:#c6663a"></div><div class="a" style="left:22.12px;top:213.38px;width:14.43px;height:14.43px;background:#f0dfc2"></div><div class="a" style="left:36.25px;top:213.38px;width:14.43px;height:14.43px;background:#c6663a"></div><div class="a" style="left:50.38px;top:213.38px;width:14.43px;height:14.43px;background:#f0dfc2"></div><div class="a" style="left:64.50px;top:213.38px;width:14.43px;height:14.43px;background:#c6663a"></div><div class="a" style="left:78.62px;top:213.38px;width:14.43px;height:14.43px;background:#f0dfc2"></div><div class="a" style="left:92.75px;top:213.38px;width:14.43px;height:14.43px;background:#c6663a"></div><div class="a" style="left:106.88px;top:213.38px;width:14.43px;height:14.43px;background:#f0dfc2"></div><svg class="a" style="left:64.15px;top:114.15px" width="14.83" height="14.83" viewBox="0 0 48 48"><g fill="#151515" stroke="#151515" stroke-width="2.6" stroke-linejoin="round"><path d="M12.2,33.5C8,30 4.5,26 4.6,22.5C4.8,18.5 8,16.8 11.5,16.8C16,16.8 19.5,19.5 22,24L24,29L26,24C28.5,19.5 32,16.8 36.5,16.8C40,16.8 43.2,18.5 43.4,22.5C43.5,26 40,30 35.8,33.5Z"/><path d="M24,30C22,25 20.3,19 20.6,15.5C20.9,13.5 22.3,12.6 24,12.6C25.7,12.6 27.1,13.5 27.4,15.5C27.7,19 26,25 24,30Z"/><path d="M12,32.3C18,31 30,31 36,32.3C37,34 37,35.5 36.6,36.4C37.4,38 37.4,41 36.8,42.6C30,45 18,45 11.2,42.6C10.6,41 10.6,38 11.4,36.4C11,35.5 11,34 12,32.3Z"/></g><g fill="#1d1e24"><path d="M12.2,33.5C8,30 4.5,26 4.6,22.5C4.8,18.5 8,16.8 11.5,16.8C16,16.8 19.5,19.5 22,24L24,29L26,24C28.5,19.5 32,16.8 36.5,16.8C40,16.8 43.2,18.5 43.4,22.5C43.5,26 40,30 35.8,33.5Z"/><path d="M24,30C22,25 20.3,19 20.6,15.5C20.9,13.5 22.3,12.6 24,12.6C25.7,12.6 27.1,13.5 27.4,15.5C27.7,19 26,25 24,30Z"/><path d="M12,32.3C18,31 30,31 36,32.3C37,34 37,35.5 36.6,36.4C37.4,38 37.4,41 36.8,42.6C30,45 18,45 11.2,42.6C10.6,41 10.6,38 11.4,36.4C11,35.5 11,34 12,32.3Z"/></g><path d="M24,4.2V12M21.2,8.2H26.8" stroke="#2a1a14" stroke-width="1.3" fill="none"/><path d="M12.5,32.2C9,29.3 6.2,26 6.3,22.8C6.5,19.8 8.8,18.5 11.5,18.5C15.3,18.5 18.8,21 20.8,25.2L23,30.5M35.5,32.2C39,29.3 41.8,26 41.7,22.8C41.5,19.8 39.2,18.5 36.5,18.5C32.7,18.5 29.2,21 27.2,25.2L25,30.5" stroke="#f4f4f4" stroke-width="1" fill="none"/><path d="M24,28C22.6,24 21.9,18.5 22.1,15.8C22.3,14.6 23.1,14.1 24,14.1C24.9,14.1 25.7,14.6 25.9,15.8C26.1,18.5 25.4,24 24,28Z" fill="none" stroke="#f4f4f4" stroke-width="0.9"/><path d="M12.8,32.8C18,31.6 30,31.6 35.2,32.8M12.5,36.6C18,35.2 30,35.2 35.5,36.6M12,40.6C18,39.2 30,39.2 36,40.6" stroke="#f4f4f4" stroke-width="1.1" fill="none"/></svg><svg class="a" style="left:7.65px;top:128.27px" width="14.83" height="14.83" viewBox="0 0 48 48"><g fill="#151515" stroke="#151515" stroke-width="2.6" stroke-linejoin="round"><circle cx="24.6" cy="11.5" r="4.3"/><ellipse cx="24.8" cy="22" rx="8.4" ry="6.4"/><path d="M10.8,43.4L10.8,39C10.8,31 17,27.5 24.8,27.5C32.6,27.5 38.8,31 38.8,39L38.8,43.4Z"/></g><g fill="#1d1e24"><circle cx="24.6" cy="11.5" r="4.3"/><ellipse cx="24.8" cy="22" rx="8.4" ry="6.4"/><path d="M10.8,43.4L10.8,39C10.8,31 17,27.5 24.8,27.5C32.6,27.5 38.8,31 38.8,39L38.8,43.4Z"/></g></svg><svg class="a" style="left:21.77px;top:128.27px" width="14.83" height="14.83" viewBox="0 0 48 48"><g fill="#151515" stroke="#151515" stroke-width="2.6" stroke-linejoin="round"><circle cx="24.6" cy="11.5" r="4.3"/><ellipse cx="24.8" cy="22" rx="8.4" ry="6.4"/><path d="M10.8,43.4L10.8,39C10.8,31 17,27.5 24.8,27.5C32.6,27.5 38.8,31 38.8,39L38.8,43.4Z"/></g><g fill="#1d1e24"><circle cx="24.6" cy="11.5" r="4.3"/><ellipse cx="24.8" cy="22" rx="8.4" ry="6.4"/><path d="M10.8,43.4L10.8,39C10.8,31 17,27.5 24.8,27.5C32.6,27.5 38.8,31 38.8,39L38.8,43.4Z"/></g></svg><svg class="a" style="left:35.90px;top:128.27px" width="14.83" height="14.83" viewBox="0 0 48 48"><g fill="#151515" stroke="#151515" stroke-width="2.6" stroke-linejoin="round"><circle cx="24.6" cy="11.5" r="4.3"/><ellipse cx="24.8" cy="22" rx="8.4" ry="6.4"/><path d="M10.8,43.4L10.8,39C10.8,31 17,27.5 24.8,27.5C32.6,27.5 38.8,31 38.8,39L38.8,43.4Z"/></g><g fill="#1d1e24"><circle cx="24.6" cy="11.5" r="4.3"/><ellipse cx="24.8" cy="22" rx="8.4" ry="6.4"/><path d="M10.8,43.4L10.8,39C10.8,31 17,27.5 24.8,27.5C32.6,27.5 38.8,31 38.8,39L38.8,43.4Z"/></g></svg><svg class="a" style="left:92.40px;top:128.27px" width="14.83" height="14.83" viewBox="0 0 48 48"><g fill="#151515" stroke="#151515" stroke-width="2.6" stroke-linejoin="round"><circle cx="24.6" cy="11.5" r="4.3"/><ellipse cx="24.8" cy="22" rx="8.4" ry="6.4"/><path d="M10.8,43.4L10.8,39C10.8,31 17,27.5 24.8,27.5C32.6,27.5 38.8,31 38.8,39L38.8,43.4Z"/></g><g fill="#1d1e24"><circle cx="24.6" cy="11.5" r="4.3"/><ellipse cx="24.8" cy="22" rx="8.4" ry="6.4"/><path d="M10.8,43.4L10.8,39C10.8,31 17,27.5 24.8,27.5C32.6,27.5 38.8,31 38.8,39L38.8,43.4Z"/></g></svg><svg class="a" style="left:106.52px;top:128.27px" width="14.83" height="14.83" viewBox="0 0 48 48"><g fill="#151515" stroke="#151515" stroke-width="2.6" stroke-linejoin="round"><circle cx="24.6" cy="11.5" r="4.3"/><ellipse cx="24.8" cy="22" rx="8.4" ry="6.4"/><path d="M10.8,43.4L10.8,39C10.8,31 17,27.5 24.8,27.5C32.6,27.5 38.8,31 38.8,39L38.8,43.4Z"/></g><g fill="#1d1e24"><circle cx="24.6" cy="11.5" r="4.3"/><ellipse cx="24.8" cy="22" rx="8.4" ry="6.4"/><path d="M10.8,43.4L10.8,39C10.8,31 17,27.5 24.8,27.5C32.6,27.5 38.8,31 38.8,39L38.8,43.4Z"/></g></svg><svg class="a" style="left:64.15px;top:142.40px" width="14.83" height="14.83" viewBox="0 0 48 48"><g fill="#151515" stroke="#151515" stroke-width="2.6" stroke-linejoin="round"><circle cx="24.6" cy="11.5" r="4.3"/><ellipse cx="24.8" cy="22" rx="8.4" ry="6.4"/><path d="M10.8,43.4L10.8,39C10.8,31 17,27.5 24.8,27.5C32.6,27.5 38.8,31 38.8,39L38.8,43.4Z"/></g><g fill="url(#gw)"><circle cx="24.6" cy="11.5" r="4.3"/><ellipse cx="24.8" cy="22" rx="8.4" ry="6.4"/><path d="M10.8,43.4L10.8,39C10.8,31 17,27.5 24.8,27.5C32.6,27.5 38.8,31 38.8,39L38.8,43.4Z"/></g></svg><svg class="a" style="left:21.77px;top:156.52px" width="14.83" height="14.83" viewBox="0 0 48 48"><g fill="#151515" stroke="#151515" stroke-width="2.6" stroke-linejoin="round"><path d="M17.5,44.3L43.5,44.3C43.8,31 40.5,17.5 28.5,11.5L24,5.3L20.6,10.3L14.2,5.3L12.8,13C9.5,18 6.5,24.5 5.2,29.5C4.5,32.5 6,35.5 8.6,35.8C11.5,36.2 14.5,36 17.6,36.2C17.4,39 17.4,42 17.5,44.3Z"/></g><g fill="url(#gw)"><path d="M17.5,44.3L43.5,44.3C43.8,31 40.5,17.5 28.5,11.5L24,5.3L20.6,10.3L14.2,5.3L12.8,13C9.5,18 6.5,24.5 5.2,29.5C4.5,32.5 6,35.5 8.6,35.8C11.5,36.2 14.5,36 17.6,36.2C17.4,39 17.4,42 17.5,44.3Z"/></g><path d="M26.6,20.5C26.5,26 24,30.5 17.6,36.2" stroke="#151515" stroke-width="1.1" fill="none"/><path d="M14,19L17.5,17.2" stroke="#151515" stroke-width="1.3" fill="none"/><circle cx="8.5" cy="30.5" r=".8" fill="#151515"/><path d="M11.5,33.5C12,34.5 12.5,35 13,35.2" stroke="#151515" stroke-width=".8" fill="none"/></svg><svg class="a" style="left:50.02px;top:156.52px" width="14.83" height="14.83" viewBox="0 0 48 48"><g fill="#151515" stroke="#151515" stroke-width="2.6" stroke-linejoin="round"><circle cx="24.6" cy="11.5" r="4.3"/><ellipse cx="24.8" cy="22" rx="8.4" ry="6.4"/><path d="M10.8,43.4L10.8,39C10.8,31 17,27.5 24.8,27.5C32.6,27.5 38.8,31 38.8,39L38.8,43.4Z"/></g><g fill="#1d1e24"><circle cx="24.6" cy="11.5" r="4.3"/><ellipse cx="24.8" cy="22" rx="8.4" ry="6.4"/><path d="M10.8,43.4L10.8,39C10.8,31 17,27.5 24.8,27.5C32.6,27.5 38.8,31 38.8,39L38.8,43.4Z"/></g></svg><svg class="a" style="left:92.40px;top:156.52px" width="14.83" height="14.83" viewBox="0 0 48 48"><g fill="#151515" stroke="#151515" stroke-width="2.6" stroke-linejoin="round"><circle cx="24.2" cy="8.6" r="2.9"/><path d="M24.2,11.4C30,14 34.6,19 34.4,23.5C34.3,26.5 32.5,28 31,28.6L17.4,28.6C15.9,28 14.1,26.5 14,23.5C13.8,19 18.4,14 24.2,11.4Z"/><path d="M17.6,28.2L30.8,28.2C31.6,30 31.5,34 30.6,36.4L17.8,36.4C16.9,34 16.8,30 17.6,28.2Z"/><path d="M24.2,36.6C20,38.8 14,37.3 9.5,37.3C6.5,37.3 4.8,38.8 5,40.8C5.3,42.8 7.5,43.4 9.5,42.6C14,41.6 19,42 22,43.8C23,44.3 24.2,43.6 24.2,42.6C24.2,43.6 25.4,44.3 26.4,43.8C29.4,42 34.4,41.6 38.9,42.6C40.9,43.4 43.1,42.8 43.4,40.8C43.6,38.8 41.9,37.3 38.9,37.3C34.4,37.3 28.4,38.8 24.2,36.6Z"/></g><g fill="url(#gw)"><circle cx="24.2" cy="8.6" r="2.9"/><path d="M24.2,11.4C30,14 34.6,19 34.4,23.5C34.3,26.5 32.5,28 31,28.6L17.4,28.6C15.9,28 14.1,26.5 14,23.5C13.8,19 18.4,14 24.2,11.4Z"/><path d="M17.6,28.2L30.8,28.2C31.6,30 31.5,34 30.6,36.4L17.8,36.4C16.9,34 16.8,30 17.6,28.2Z"/><path d="M24.2,36.6C20,38.8 14,37.3 9.5,37.3C6.5,37.3 4.8,38.8 5,40.8C5.3,42.8 7.5,43.4 9.5,42.6C14,41.6 19,42 22,43.8C23,44.3 24.2,43.6 24.2,42.6C24.2,43.6 25.4,44.3 26.4,43.8C29.4,42 34.4,41.6 38.9,42.6C40.9,43.4 43.1,42.8 43.4,40.8C43.6,38.8 41.9,37.3 38.9,37.3C34.4,37.3 28.4,38.8 24.2,36.6Z"/></g><path d="M24.2,17.5V24.5M20.7,21H27.7" stroke="#151515" stroke-width="1.2" fill="none"/><path d="M17.6,33H30.8" stroke="#151515" stroke-width="1" fill="none"/><path d="M17.4,28.6H31M24.2,42V38" stroke="#151515" stroke-width="0.9" fill="none"/></svg><svg class="a" style="left:106.52px;top:170.65px" width="14.83" height="14.83" viewBox="0 0 48 48"><g fill="#151515" stroke="#151515" stroke-width="2.6" stroke-linejoin="round"><circle cx="24.6" cy="11.5" r="4.3"/><ellipse cx="24.8" cy="22" rx="8.4" ry="6.4"/><path d="M10.8,43.4L10.8,39C10.8,31 17,27.5 24.8,27.5C32.6,27.5 38.8,31 38.8,39L38.8,43.4Z"/></g><g fill="url(#gw)"><circle cx="24.6" cy="11.5" r="4.3"/><ellipse cx="24.8" cy="22" rx="8.4" ry="6.4"/><path d="M10.8,43.4L10.8,39C10.8,31 17,27.5 24.8,27.5C32.6,27.5 38.8,31 38.8,39L38.8,43.4Z"/></g></svg><svg class="a" style="left:92.40px;top:184.77px" width="14.83" height="14.83" viewBox="0 0 48 48"><g fill="#151515" stroke="#151515" stroke-width="2.0" stroke-linejoin="round"><path d="M11.5,31L5.5,13.3L14.4,28L14.2,8.8L19.8,27L24,7.8L28.2,27L33.8,8.8L33.6,28L42.5,13.3L36.5,31Z"/><path d="M11.8,29.8C18,28.4 30,28.4 36.2,29.8C36.8,31 36.8,32.5 36.3,33.4C37,35 37,36.5 36.5,37.7C37.6,39 37.8,41.5 37.2,42.8C30,45 18,45 10.8,42.8C10.2,41.5 10.4,39 11.5,37.7C11,36.5 11,35 11.7,33.4C11.2,32.5 11.2,31 11.8,29.8Z"/><circle cx="5.5" cy="13.3" r="2.3"/><circle cx="14.2" cy="8.8" r="2.3"/><circle cx="24" cy="7.8" r="2.3"/><circle cx="33.8" cy="8.8" r="2.3"/><circle cx="42.5" cy="13.3" r="2.3"/></g><g fill="#1d1e24"><path d="M11.5,31L5.5,13.3L14.4,28L14.2,8.8L19.8,27L24,7.8L28.2,27L33.8,8.8L33.6,28L42.5,13.3L36.5,31Z"/><path d="M11.8,29.8C18,28.4 30,28.4 36.2,29.8C36.8,31 36.8,32.5 36.3,33.4C37,35 37,36.5 36.5,37.7C37.6,39 37.8,41.5 37.2,42.8C30,45 18,45 10.8,42.8C10.2,41.5 10.4,39 11.5,37.7C11,36.5 11,35 11.7,33.4C11.2,32.5 11.2,31 11.8,29.8Z"/><circle cx="5.5" cy="13.3" r="2.3"/><circle cx="14.2" cy="8.8" r="2.3"/><circle cx="24" cy="7.8" r="2.3"/><circle cx="33.8" cy="8.8" r="2.3"/><circle cx="42.5" cy="13.3" r="2.3"/></g><path d="M12.3,33C18,31.7 30,31.7 35.7,33M12,36.8C18,35.5 30,35.5 36,36.8M11.6,40.6C18,39.3 30,39.3 36.4,40.6" stroke="#f4f4f4" stroke-width="1.1" fill="none"/></svg><svg class="a" style="left:7.65px;top:198.90px" width="14.83" height="14.83" viewBox="0 0 48 48"><g fill="#151515" stroke="#151515" stroke-width="2.6" stroke-linejoin="round"><circle cx="24.6" cy="11.5" r="4.3"/><ellipse cx="24.8" cy="22" rx="8.4" ry="6.4"/><path d="M10.8,43.4L10.8,39C10.8,31 17,27.5 24.8,27.5C32.6,27.5 38.8,31 38.8,39L38.8,43.4Z"/></g><g fill="url(#gw)"><circle cx="24.6" cy="11.5" r="4.3"/><ellipse cx="24.8" cy="22" rx="8.4" ry="6.4"/><path d="M10.8,43.4L10.8,39C10.8,31 17,27.5 24.8,27.5C32.6,27.5 38.8,31 38.8,39L38.8,43.4Z"/></g></svg><svg class="a" style="left:21.77px;top:198.90px" width="14.83" height="14.83" viewBox="0 0 48 48"><g fill="#151515" stroke="#151515" stroke-width="2.6" stroke-linejoin="round"><circle cx="24.6" cy="11.5" r="4.3"/><ellipse cx="24.8" cy="22" rx="8.4" ry="6.4"/><path d="M10.8,43.4L10.8,39C10.8,31 17,27.5 24.8,27.5C32.6,27.5 38.8,31 38.8,39L38.8,43.4Z"/></g><g fill="url(#gw)"><circle cx="24.6" cy="11.5" r="4.3"/><ellipse cx="24.8" cy="22" rx="8.4" ry="6.4"/><path d="M10.8,43.4L10.8,39C10.8,31 17,27.5 24.8,27.5C32.6,27.5 38.8,31 38.8,39L38.8,43.4Z"/></g></svg><svg class="a" style="left:35.90px;top:198.90px" width="14.83" height="14.83" viewBox="0 0 48 48"><g fill="#151515" stroke="#151515" stroke-width="2.6" stroke-linejoin="round"><path d="M17.5,44.3L43.5,44.3C43.8,31 40.5,17.5 28.5,11.5L24,5.3L20.6,10.3L14.2,5.3L12.8,13C9.5,18 6.5,24.5 5.2,29.5C4.5,32.5 6,35.5 8.6,35.8C11.5,36.2 14.5,36 17.6,36.2C17.4,39 17.4,42 17.5,44.3Z"/></g><g fill="#1d1e24"><path d="M17.5,44.3L43.5,44.3C43.8,31 40.5,17.5 28.5,11.5L24,5.3L20.6,10.3L14.2,5.3L12.8,13C9.5,18 6.5,24.5 5.2,29.5C4.5,32.5 6,35.5 8.6,35.8C11.5,36.2 14.5,36 17.6,36.2C17.4,39 17.4,42 17.5,44.3Z"/></g><path d="M27,11.5C38,17.5 41.2,30 41,43" stroke="#f4f4f4" stroke-width="1.1" fill="none"/><path d="M14,19L17.5,17.2" stroke="#f4f4f4" stroke-width="1.3" fill="none"/><circle cx="8.5" cy="30.5" r=".8" fill="#f4f4f4"/></svg><svg class="a" style="left:64.15px;top:198.90px" width="14.83" height="14.83" viewBox="0 0 48 48"><g fill="#151515" stroke="#151515" stroke-width="2.0" stroke-linejoin="round"><path d="M11.5,31L5.5,13.3L14.4,28L14.2,8.8L19.8,27L24,7.8L28.2,27L33.8,8.8L33.6,28L42.5,13.3L36.5,31Z"/><path d="M11.8,29.8C18,28.4 30,28.4 36.2,29.8C36.8,31 36.8,32.5 36.3,33.4C37,35 37,36.5 36.5,37.7C37.6,39 37.8,41.5 37.2,42.8C30,45 18,45 10.8,42.8C10.2,41.5 10.4,39 11.5,37.7C11,36.5 11,35 11.7,33.4C11.2,32.5 11.2,31 11.8,29.8Z"/><circle cx="5.5" cy="13.3" r="2.3"/><circle cx="14.2" cy="8.8" r="2.3"/><circle cx="24" cy="7.8" r="2.3"/><circle cx="33.8" cy="8.8" r="2.3"/><circle cx="42.5" cy="13.3" r="2.3"/></g><g fill="url(#gw)"><path d="M11.5,31L5.5,13.3L14.4,28L14.2,8.8L19.8,27L24,7.8L28.2,27L33.8,8.8L33.6,28L42.5,13.3L36.5,31Z"/><path d="M11.8,29.8C18,28.4 30,28.4 36.2,29.8C36.8,31 36.8,32.5 36.3,33.4C37,35 37,36.5 36.5,37.7C37.6,39 37.8,41.5 37.2,42.8C30,45 18,45 10.8,42.8C10.2,41.5 10.4,39 11.5,37.7C11,36.5 11,35 11.7,33.4C11.2,32.5 11.2,31 11.8,29.8Z"/><circle cx="5.5" cy="13.3" r="2.3"/><circle cx="14.2" cy="8.8" r="2.3"/><circle cx="24" cy="7.8" r="2.3"/><circle cx="33.8" cy="8.8" r="2.3"/><circle cx="42.5" cy="13.3" r="2.3"/></g><path d="M11.5,31L5.5,13.3M14.4,28L14.2,8.8M19.8,27L24,7.8M28.2,27L33.8,8.8M33.6,28L42.5,13.3M11.5,31L14.4,28M14.2,8.8L19.8,27M24,7.8L28.2,27M33.8,8.8L33.6,28M36.5,31L42.5,13.3M5.5,13.3L14.4,28M42.5,13.3L33.6,28" stroke="#151515" stroke-width="1" fill="none"/><path d="M11.7,33.4C18,32 30,32 36.3,33.4M11.5,37.7C18,36.3 30,36.3 36.5,37.7M11,41.5C18,40.2 30,40.2 37,41.5" stroke="#151515" stroke-width="1" fill="none"/><g fill="#f4f4f0"><circle cx="5.5" cy="13.3" r="1.2"/><circle cx="14.2" cy="8.8" r="1.2"/><circle cx="24" cy="7.8" r="1.2"/><circle cx="33.8" cy="8.8" r="1.2"/><circle cx="42.5" cy="13.3" r="1.2"/></g></svg><svg class="a" style="left:78.27px;top:198.90px" width="14.83" height="14.83" viewBox="0 0 48 48"><g fill="#151515" stroke="#151515" stroke-width="2.6" stroke-linejoin="round"><path d="M12.2,6.8L17.3,6.8L17.3,9.8L21.3,9.8L21.3,6.8L26.7,6.8L26.7,9.8L30.8,9.8L30.8,6.8L36.6,6.8L36.6,14.5L33,17.5L33,31L35.3,33.5L35.3,40L39.3,40L39.3,44.3L9.7,44.3L9.7,40L13.5,40L13.5,33.5L16,31L16,17.5L12.2,14.5Z"/></g><g fill="#1d1e24"><path d="M12.2,6.8L17.3,6.8L17.3,9.8L21.3,9.8L21.3,6.8L26.7,6.8L26.7,9.8L30.8,9.8L30.8,6.8L36.6,6.8L36.6,14.5L33,17.5L33,31L35.3,33.5L35.3,40L39.3,40L39.3,44.3L9.7,44.3L9.7,40L13.5,40L13.5,33.5L16,31L16,17.5L12.2,14.5Z"/></g><path d="M13.5,15H35.3M16.5,19H32.5M16.5,31.4H32.5M14.2,35.6H34.6M14.2,39H34.6" stroke="#f4f4f4" stroke-width="1.1" fill="none"/></svg><svg class="a" style="left:92.40px;top:198.90px" width="14.83" height="14.83" viewBox="0 0 48 48"><g fill="#151515" stroke="#151515" stroke-width="2.6" stroke-linejoin="round"><circle cx="24.6" cy="11.5" r="4.3"/><ellipse cx="24.8" cy="22" rx="8.4" ry="6.4"/><path d="M10.8,43.4L10.8,39C10.8,31 17,27.5 24.8,27.5C32.6,27.5 38.8,31 38.8,39L38.8,43.4Z"/></g><g fill="url(#gw)"><circle cx="24.6" cy="11.5" r="4.3"/><ellipse cx="24.8" cy="22" rx="8.4" ry="6.4"/><path d="M10.8,43.4L10.8,39C10.8,31 17,27.5 24.8,27.5C32.6,27.5 38.8,31 38.8,39L38.8,43.4Z"/></g></svg><svg class="a" style="left:50.02px;top:213.02px" width="14.83" height="14.83" viewBox="0 0 48 48"><g fill="#151515" stroke="#151515" stroke-width="2.6" stroke-linejoin="round"><path d="M12.2,6.8L17.3,6.8L17.3,9.8L21.3,9.8L21.3,6.8L26.7,6.8L26.7,9.8L30.8,9.8L30.8,6.8L36.6,6.8L36.6,14.5L33,17.5L33,31L35.3,33.5L35.3,40L39.3,40L39.3,44.3L9.7,44.3L9.7,40L13.5,40L13.5,33.5L16,31L16,17.5L12.2,14.5Z"/></g><g fill="url(#gw)"><path d="M12.2,6.8L17.3,6.8L17.3,9.8L21.3,9.8L21.3,6.8L26.7,6.8L26.7,9.8L30.8,9.8L30.8,6.8L36.6,6.8L36.6,14.5L33,17.5L33,31L35.3,33.5L35.3,40L39.3,40L39.3,44.3L9.7,44.3L9.7,40L13.5,40L13.5,33.5L16,31L16,17.5L12.2,14.5Z"/></g><path d="M12.2,14.5H36.6M16,17.5H33M16,31H33M13.5,33.5H35.3M13.5,40H35.3" stroke="#151515" stroke-width="1" fill="none"/></svg><svg class="a" style="left:64.15px;top:213.02px" width="14.83" height="14.83" viewBox="0 0 48 48"><g fill="#151515" stroke="#151515" stroke-width="2.6" stroke-linejoin="round"><circle cx="24.2" cy="8.6" r="2.9"/><path d="M24.2,11.4C30,14 34.6,19 34.4,23.5C34.3,26.5 32.5,28 31,28.6L17.4,28.6C15.9,28 14.1,26.5 14,23.5C13.8,19 18.4,14 24.2,11.4Z"/><path d="M17.6,28.2L30.8,28.2C31.6,30 31.5,34 30.6,36.4L17.8,36.4C16.9,34 16.8,30 17.6,28.2Z"/><path d="M24.2,36.6C20,38.8 14,37.3 9.5,37.3C6.5,37.3 4.8,38.8 5,40.8C5.3,42.8 7.5,43.4 9.5,42.6C14,41.6 19,42 22,43.8C23,44.3 24.2,43.6 24.2,42.6C24.2,43.6 25.4,44.3 26.4,43.8C29.4,42 34.4,41.6 38.9,42.6C40.9,43.4 43.1,42.8 43.4,40.8C43.6,38.8 41.9,37.3 38.9,37.3C34.4,37.3 28.4,38.8 24.2,36.6Z"/></g><g fill="#1d1e24"><circle cx="24.2" cy="8.6" r="2.9"/><path d="M24.2,11.4C30,14 34.6,19 34.4,23.5C34.3,26.5 32.5,28 31,28.6L17.4,28.6C15.9,28 14.1,26.5 14,23.5C13.8,19 18.4,14 24.2,11.4Z"/><path d="M17.6,28.2L30.8,28.2C31.6,30 31.5,34 30.6,36.4L17.8,36.4C16.9,34 16.8,30 17.6,28.2Z"/><path d="M24.2,36.6C20,38.8 14,37.3 9.5,37.3C6.5,37.3 4.8,38.8 5,40.8C5.3,42.8 7.5,43.4 9.5,42.6C14,41.6 19,42 22,43.8C23,44.3 24.2,43.6 24.2,42.6C24.2,43.6 25.4,44.3 26.4,43.8C29.4,42 34.4,41.6 38.9,42.6C40.9,43.4 43.1,42.8 43.4,40.8C43.6,38.8 41.9,37.3 38.9,37.3C34.4,37.3 28.4,38.8 24.2,36.6Z"/></g><path d="M24.2,17.5V24.5M20.7,21H27.7" stroke="#f4f4f4" stroke-width="1.2" fill="none"/><path d="M17.6,33H30.8" stroke="#f4f4f4" stroke-width="1" fill="none"/><path d="M18,30.8H30.4" stroke="#f4f4f4" stroke-width="0.9" fill="none"/></svg><svg class="a" style="left:106.52px;top:213.02px" width="14.83" height="14.83" viewBox="0 0 48 48"><g fill="#151515" stroke="#151515" stroke-width="2.6" stroke-linejoin="round"><path d="M12.2,33.5C8,30 4.5,26 4.6,22.5C4.8,18.5 8,16.8 11.5,16.8C16,16.8 19.5,19.5 22,24L24,29L26,24C28.5,19.5 32,16.8 36.5,16.8C40,16.8 43.2,18.5 43.4,22.5C43.5,26 40,30 35.8,33.5Z"/><path d="M24,30C22,25 20.3,19 20.6,15.5C20.9,13.5 22.3,12.6 24,12.6C25.7,12.6 27.1,13.5 27.4,15.5C27.7,19 26,25 24,30Z"/><path d="M12,32.3C18,31 30,31 36,32.3C37,34 37,35.5 36.6,36.4C37.4,38 37.4,41 36.8,42.6C30,45 18,45 11.2,42.6C10.6,41 10.6,38 11.4,36.4C11,35.5 11,34 12,32.3Z"/></g><g fill="url(#gw)"><path d="M12.2,33.5C8,30 4.5,26 4.6,22.5C4.8,18.5 8,16.8 11.5,16.8C16,16.8 19.5,19.5 22,24L24,29L26,24C28.5,19.5 32,16.8 36.5,16.8C40,16.8 43.2,18.5 43.4,22.5C43.5,26 40,30 35.8,33.5Z"/><path d="M24,30C22,25 20.3,19 20.6,15.5C20.9,13.5 22.3,12.6 24,12.6C25.7,12.6 27.1,13.5 27.4,15.5C27.7,19 26,25 24,30Z"/><path d="M12,32.3C18,31 30,31 36,32.3C37,34 37,35.5 36.6,36.4C37.4,38 37.4,41 36.8,42.6C30,45 18,45 11.2,42.6C10.6,41 10.6,38 11.4,36.4C11,35.5 11,34 12,32.3Z"/></g><g fill="none" stroke="#151515" stroke-width="1.1"><path d="M12.2,33.5C8,30 4.5,26 4.6,22.5C4.8,18.5 8,16.8 11.5,16.8C16,16.8 19.5,19.5 22,24L24,29L26,24C28.5,19.5 32,16.8 36.5,16.8C40,16.8 43.2,18.5 43.4,22.5C43.5,26 40,30 35.8,33.5"/><path d="M24,30C22,25 20.3,19 20.6,15.5C20.9,13.5 22.3,12.6 24,12.6C25.7,12.6 27.1,13.5 27.4,15.5C27.7,19 26,25 24,30Z"/><path d="M12,32.3C18,31 30,31 36,32.3"/></g><path d="M24,4.2V12M21.2,8.2H26.8" stroke="#2a1a14" stroke-width="1.3" fill="none"/><path d="M12,36.3C18,34.8 30,34.8 36,36.3M11.8,40.5C18,39 30,39 36.2,40.5" stroke="#151515" stroke-width="1.1" fill="none"/></svg><div class="a" style="left:7px;top:282.5px;width:115.0px;height:115.0px;background:#6a5548"></div><div class="a" style="left:8.00px;top:283.50px;width:14.43px;height:14.43px;background:#f0dfc2"></div><div class="a" style="left:22.12px;top:283.50px;width:14.43px;height:14.43px;background:#c6663a"></div><div class="a" style="left:36.25px;top:283.50px;width:14.43px;height:14.43px;background:#f0dfc2"></div><div class="a" style="left:50.38px;top:283.50px;width:14.43px;height:14.43px;background:#c6663a"></div><div class="a" style="left:64.50px;top:283.50px;width:14.43px;height:14.43px;background:#f0dfc2"></div><div class="a" style="left:78.62px;top:283.50px;width:14.43px;height:14.43px;background:#c6663a"></div><div class="a" style="left:92.75px;top:283.50px;width:14.43px;height:14.43px;background:#f0dfc2"></div><div class="a" style="left:106.88px;top:283.50px;width:14.43px;height:14.43px;background:#c6663a"></div><div class="a" style="left:8.00px;top:297.62px;width:14.43px;height:14.43px;background:#c6663a"></div><div class="a" style="left:22.12px;top:297.62px;width:14.43px;height:14.43px;background:#f0dfc2"></div><div class="a" style="left:36.25px;top:297.62px;width:14.43px;height:14.43px;background:#c6663a"></div><div class="a" style="left:50.38px;top:297.62px;width:14.43px;height:14.43px;background:#f0dfc2"></div><div class="a" style="left:64.50px;top:297.62px;width:14.43px;height:14.43px;background:#c6663a"></div><div class="a" style="left:78.62px;top:297.62px;width:14.43px;height:14.43px;background:#f0dfc2"></div><div class="a" style="left:92.75px;top:297.62px;width:14.43px;height:14.43px;background:#c6663a"></div><div class="a" style="left:106.88px;top:297.62px;width:14.43px;height:14.43px;background:#f0dfc2"></div><div class="a" style="left:8.00px;top:311.75px;width:14.43px;height:14.43px;background:#f0dfc2"></div><div class="a" style="left:22.12px;top:311.75px;width:14.43px;height:14.43px;background:#c6663a"></div><div class="a" style="left:36.25px;top:311.75px;width:14.43px;height:14.43px;background:#f0dfc2"></div><div class="a" style="left:50.38px;top:311.75px;width:14.43px;height:14.43px;background:#c6663a"></div><div class="a" style="left:64.50px;top:311.75px;width:14.43px;height:14.43px;background:#f0dfc2"></div><div class="a" style="left:78.62px;top:311.75px;width:14.43px;height:14.43px;background:#c6663a"></div><div class="a" style="left:92.75px;top:311.75px;width:14.43px;height:14.43px;background:#f0dfc2"></div><div class="a" style="left:106.88px;top:311.75px;width:14.43px;height:14.43px;background:#c6663a"></div><svg class="a" style="left:92.40px;top:283.15px" width="14.83" height="14.83" viewBox="0 0 48 48"><g fill="#151515" stroke="#151515" stroke-width="2.6" stroke-linejoin="round"><path d="M12.2,33.5C8,30 4.5,26 4.6,22.5C4.8,18.5 8,16.8 11.5,16.8C16,16.8 19.5,19.5 22,24L24,29L26,24C28.5,19.5 32,16.8 36.5,16.8C40,16.8 43.2,18.5 43.4,22.5C43.5,26 40,30 35.8,33.5Z"/><path d="M24,30C22,25 20.3,19 20.6,15.5C20.9,13.5 22.3,12.6 24,12.6C25.7,12.6 27.1,13.5 27.4,15.5C27.7,19 26,25 24,30Z"/><path d="M12,32.3C18,31 30,31 36,32.3C37,34 37,35.5 36.6,36.4C37.4,38 37.4,41 36.8,42.6C30,45 18,45 11.2,42.6C10.6,41 10.6,38 11.4,36.4C11,35.5 11,34 12,32.3Z"/></g><g fill="#1d1e24"><path d="M12.2,33.5C8,30 4.5,26 4.6,22.5C4.8,18.5 8,16.8 11.5,16.8C16,16.8 19.5,19.5 22,24L24,29L26,24C28.5,19.5 32,16.8 36.5,16.8C40,16.8 43.2,18.5 43.4,22.5C43.5,26 40,30 35.8,33.5Z"/><path d="M24,30C22,25 20.3,19 20.6,15.5C20.9,13.5 22.3,12.6 24,12.6C25.7,12.6 27.1,13.5 27.4,15.5C27.7,19 26,25 24,30Z"/><path d="M12,32.3C18,31 30,31 36,32.3C37,34 37,35.5 36.6,36.4C37.4,38 37.4,41 36.8,42.6C30,45 18,45 11.2,42.6C10.6,41 10.6,38 11.4,36.4C11,35.5 11,34 12,32.3Z"/></g><path d="M24,4.2V12M21.2,8.2H26.8" stroke="#2a1a14" stroke-width="1.3" fill="none"/><path d="M12.5,32.2C9,29.3 6.2,26 6.3,22.8C6.5,19.8 8.8,18.5 11.5,18.5C15.3,18.5 18.8,21 20.8,25.2L23,30.5M35.5,32.2C39,29.3 41.8,26 41.7,22.8C41.5,19.8 39.2,18.5 36.5,18.5C32.7,18.5 29.2,21 27.2,25.2L25,30.5" stroke="#f4f4f4" stroke-width="1" fill="none"/><path d="M24,28C22.6,24 21.9,18.5 22.1,15.8C22.3,14.6 23.1,14.1 24,14.1C24.9,14.1 25.7,14.6 25.9,15.8C26.1,18.5 25.4,24 24,28Z" fill="none" stroke="#f4f4f4" stroke-width="0.9"/><path d="M12.8,32.8C18,31.6 30,31.6 35.2,32.8M12.5,36.6C18,35.2 30,35.2 35.5,36.6M12,40.6C18,39.2 30,39.2 36,40.6" stroke="#f4f4f4" stroke-width="1.1" fill="none"/></svg><svg class="a" style="left:21.77px;top:297.27px" width="14.83" height="14.83" viewBox="0 0 48 48"><g fill="#151515" stroke="#151515" stroke-width="2.6" stroke-linejoin="round"><circle cx="24.6" cy="11.5" r="4.3"/><ellipse cx="24.8" cy="22" rx="8.4" ry="6.4"/><path d="M10.8,43.4L10.8,39C10.8,31 17,27.5 24.8,27.5C32.6,27.5 38.8,31 38.8,39L38.8,43.4Z"/></g><g fill="#1d1e24"><circle cx="24.6" cy="11.5" r="4.3"/><ellipse cx="24.8" cy="22" rx="8.4" ry="6.4"/><path d="M10.8,43.4L10.8,39C10.8,31 17,27.5 24.8,27.5C32.6,27.5 38.8,31 38.8,39L38.8,43.4Z"/></g></svg><svg class="a" style="left:35.90px;top:297.27px" width="14.83" height="14.83" viewBox="0 0 48 48"><g fill="#151515" stroke="#151515" stroke-width="2.6" stroke-linejoin="round"><path d="M17.5,44.3L43.5,44.3C43.8,31 40.5,17.5 28.5,11.5L24,5.3L20.6,10.3L14.2,5.3L12.8,13C9.5,18 6.5,24.5 5.2,29.5C4.5,32.5 6,35.5 8.6,35.8C11.5,36.2 14.5,36 17.6,36.2C17.4,39 17.4,42 17.5,44.3Z"/></g><g fill="url(#gw)"><path d="M17.5,44.3L43.5,44.3C43.8,31 40.5,17.5 28.5,11.5L24,5.3L20.6,10.3L14.2,5.3L12.8,13C9.5,18 6.5,24.5 5.2,29.5C4.5,32.5 6,35.5 8.6,35.8C11.5,36.2 14.5,36 17.6,36.2C17.4,39 17.4,42 17.5,44.3Z"/></g><path d="M26.6,20.5C26.5,26 24,30.5 17.6,36.2" stroke="#151515" stroke-width="1.1" fill="none"/><path d="M14,19L17.5,17.2" stroke="#151515" stroke-width="1.3" fill="none"/><circle cx="8.5" cy="30.5" r=".8" fill="#151515"/><path d="M11.5,33.5C12,34.5 12.5,35 13,35.2" stroke="#151515" stroke-width=".8" fill="none"/></svg><svg class="a" style="left:78.27px;top:297.27px" width="14.83" height="14.83" viewBox="0 0 48 48"><g fill="#151515" stroke="#151515" stroke-width="2.6" stroke-linejoin="round"><path d="M12.2,6.8L17.3,6.8L17.3,9.8L21.3,9.8L21.3,6.8L26.7,6.8L26.7,9.8L30.8,9.8L30.8,6.8L36.6,6.8L36.6,14.5L33,17.5L33,31L35.3,33.5L35.3,40L39.3,40L39.3,44.3L9.7,44.3L9.7,40L13.5,40L13.5,33.5L16,31L16,17.5L12.2,14.5Z"/></g><g fill="url(#gw)"><path d="M12.2,6.8L17.3,6.8L17.3,9.8L21.3,9.8L21.3,6.8L26.7,6.8L26.7,9.8L30.8,9.8L30.8,6.8L36.6,6.8L36.6,14.5L33,17.5L33,31L35.3,33.5L35.3,40L39.3,40L39.3,44.3L9.7,44.3L9.7,40L13.5,40L13.5,33.5L16,31L16,17.5L12.2,14.5Z"/></g><path d="M12.2,14.5H36.6M16,17.5H33M16,31H33M13.5,33.5H35.3M13.5,40H35.3" stroke="#151515" stroke-width="1" fill="none"/></svg><svg class="a" style="left:92.40px;top:297.27px" width="14.83" height="14.83" viewBox="0 0 48 48"><g fill="#151515" stroke="#151515" stroke-width="2.6" stroke-linejoin="round"><circle cx="24.6" cy="11.5" r="4.3"/><ellipse cx="24.8" cy="22" rx="8.4" ry="6.4"/><path d="M10.8,43.4L10.8,39C10.8,31 17,27.5 24.8,27.5C32.6,27.5 38.8,31 38.8,39L38.8,43.4Z"/></g><g fill="#1d1e24"><circle cx="24.6" cy="11.5" r="4.3"/><ellipse cx="24.8" cy="22" rx="8.4" ry="6.4"/><path d="M10.8,43.4L10.8,39C10.8,31 17,27.5 24.8,27.5C32.6,27.5 38.8,31 38.8,39L38.8,43.4Z"/></g></svg><svg class="a" style="left:106.52px;top:297.27px" width="14.83" height="14.83" viewBox="0 0 48 48"><g fill="#151515" stroke="#151515" stroke-width="2.6" stroke-linejoin="round"><circle cx="24.6" cy="11.5" r="4.3"/><ellipse cx="24.8" cy="22" rx="8.4" ry="6.4"/><path d="M10.8,43.4L10.8,39C10.8,31 17,27.5 24.8,27.5C32.6,27.5 38.8,31 38.8,39L38.8,43.4Z"/></g><g fill="#1d1e24"><circle cx="24.6" cy="11.5" r="4.3"/><ellipse cx="24.8" cy="22" rx="8.4" ry="6.4"/><path d="M10.8,43.4L10.8,39C10.8,31 17,27.5 24.8,27.5C32.6,27.5 38.8,31 38.8,39L38.8,43.4Z"/></g></svg><svg class="a" style="left:64.15px;top:311.40px" width="14.83" height="14.83" viewBox="0 0 48 48"><g fill="#151515" stroke="#151515" stroke-width="2.6" stroke-linejoin="round"><circle cx="24.6" cy="11.5" r="4.3"/><ellipse cx="24.8" cy="22" rx="8.4" ry="6.4"/><path d="M10.8,43.4L10.8,39C10.8,31 17,27.5 24.8,27.5C32.6,27.5 38.8,31 38.8,39L38.8,43.4Z"/></g><g fill="url(#gw)"><circle cx="24.6" cy="11.5" r="4.3"/><ellipse cx="24.8" cy="22" rx="8.4" ry="6.4"/><path d="M10.8,43.4L10.8,39C10.8,31 17,27.5 24.8,27.5C32.6,27.5 38.8,31 38.8,39L38.8,43.4Z"/></g></svg><svg class="a" style="left:78.27px;top:311.40px" width="14.83" height="14.83" viewBox="0 0 48 48"><g fill="#151515" stroke="#151515" stroke-width="2.6" stroke-linejoin="round"><circle cx="24.2" cy="8.6" r="2.9"/><path d="M24.2,11.4C30,14 34.6,19 34.4,23.5C34.3,26.5 32.5,28 31,28.6L17.4,28.6C15.9,28 14.1,26.5 14,23.5C13.8,19 18.4,14 24.2,11.4Z"/><path d="M17.6,28.2L30.8,28.2C31.6,30 31.5,34 30.6,36.4L17.8,36.4C16.9,34 16.8,30 17.6,28.2Z"/><path d="M24.2,36.6C20,38.8 14,37.3 9.5,37.3C6.5,37.3 4.8,38.8 5,40.8C5.3,42.8 7.5,43.4 9.5,42.6C14,41.6 19,42 22,43.8C23,44.3 24.2,43.6 24.2,42.6C24.2,43.6 25.4,44.3 26.4,43.8C29.4,42 34.4,41.6 38.9,42.6C40.9,43.4 43.1,42.8 43.4,40.8C43.6,38.8 41.9,37.3 38.9,37.3C34.4,37.3 28.4,38.8 24.2,36.6Z"/></g><g fill="#1d1e24"><circle cx="24.2" cy="8.6" r="2.9"/><path d="M24.2,11.4C30,14 34.6,19 34.4,23.5C34.3,26.5 32.5,28 31,28.6L17.4,28.6C15.9,28 14.1,26.5 14,23.5C13.8,19 18.4,14 24.2,11.4Z"/><path d="M17.6,28.2L30.8,28.2C31.6,30 31.5,34 30.6,36.4L17.8,36.4C16.9,34 16.8,30 17.6,28.2Z"/><path d="M24.2,36.6C20,38.8 14,37.3 9.5,37.3C6.5,37.3 4.8,38.8 5,40.8C5.3,42.8 7.5,43.4 9.5,42.6C14,41.6 19,42 22,43.8C23,44.3 24.2,43.6 24.2,42.6C24.2,43.6 25.4,44.3 26.4,43.8C29.4,42 34.4,41.6 38.9,42.6C40.9,43.4 43.1,42.8 43.4,40.8C43.6,38.8 41.9,37.3 38.9,37.3C34.4,37.3 28.4,38.8 24.2,36.6Z"/></g><path d="M24.2,17.5V24.5M20.7,21H27.7" stroke="#f4f4f4" stroke-width="1.2" fill="none"/><path d="M17.6,33H30.8" stroke="#f4f4f4" stroke-width="1" fill="none"/><path d="M18,30.8H30.4" stroke="#f4f4f4" stroke-width="0.9" fill="none"/></svg><div class="a nt" style="left:3px;top:59.7px"><span class="cm">Tal&#39;s queen, rook and bishop are attacked and the king is threatened with mate in two.</span></div><div class="a" style="left:313px;top:52.0px;width:28px;height:13px;background:#111"></div><div class="a nt" style="left:316px;top:59.7px"><b style="color:#fff;letter-spacing:-0.3px">21.h4!!</b></div><div class="a" style="left:345px;top:55.5px;width:16px;height:8px;background:linear-gradient(#f03030,#c01010)"></div><div class="a nt" style="left:365px;top:59.7px"><span class="cm">A breezy move that</span></div><div class="a nt" style="left:3px;top:73.3px"><span class="cm">puts out the fire round him.</span>  21...Qg3</div><div class="a nt" style="left:11px;top:86.1px"><span class="gv">[ </span></div><div class="a" style="left:17px;top:81.5px;width:7px;height:8px;background:#a8c870;border:1px solid #7a9a50"></div><div class="a" style="left:19px;top:85.0px;width:3px;height:1.2px;background:#304a20"></div><div class="a nt" style="left:27px;top:86.1px"><span style="text-decoration:underline dotted;color:#3a3a3a">21...Qxe2??</span>  <span style="color:#3a3a3a">22.Nxc7#</span><span class="gv"> is a lovely finish with Black queen being only a spectator. ]</span></div><div class="a nt" style="left:3px;top:99.3px">22.Rd1!  Rf2</div><div class="a nt" style="left:3px;top:242.9px"><span class="cm">Once again Black&#39;s attack threatens to turn into a towering inferno.</span>  23.Qxf2!!</div><div class="a" style="left:285px;top:238.5px;width:17px;height:8px;background:linear-gradient(#f03030,#c01010)"></div><div class="a nt" style="left:306px;top:242.9px"><span class="cm">Pouring cold shower on all his hopes.</span></div><div class="a nt" style="left:3px;top:255.6px">23...Bxf2  24.Rxd5  Qxh4+ <span class="cm">Threatened by Rd8 mate, Black is forced to surrender the queen.</span>  25.Bxh4  Bxh4  26.Nxc7+</div><div class="a nt" style="left:3px;top:268.4px">Kf8  27.Rf5+  Bf6  28.Rd5</div><div class="a" style="left:103px;top:264.0px;width:18px;height:8px;background:linear-gradient(#30a030,#107010)"></div><div class="a nt" style="left:124px;top:268.4px"><span class="cm">Endgame RN-BN</span>  28...a5  29.Rd7  Nb4  30.Rf7+  Kg8</div></div><div class="a" style="left:969px;top:137.5px;width:9px;height:326px;background:#3a3a3c"></div><div class="a" style="left:971px;top:311px;width:5px;height:10px;background:#8a8a8a"></div><div class="a" style="left:971px;top:140px;width:0;height:0;border-bottom:2px solid #aaa;border-left:2px solid transparent;border-right:2px solid transparent"></div><div class="a" style="left:971px;top:459px;width:0;height:0;border-top:2px solid #aaa;border-left:2px solid transparent;border-right:2px solid transparent"></div><div class="a" style="left:978px;top:137.5px;width:22px;height:327px;background:#e4e4e4"></div><div class="a" style="left:982px;top:153.4px;width:15px;height:1px;background:#d2d2d2"></div><div class="a" style="left:982px;top:167.8px;width:15px;height:1px;background:#d2d2d2"></div><div class="a" style="left:982px;top:182.5px;width:15px;height:1px;background:#d2d2d2"></div><div class="a" style="left:982px;top:197.2px;width:15px;height:1px;background:#d2d2d2"></div><div class="a" style="left:982px;top:211.3px;width:15px;height:1px;background:#d2d2d2"></div><div class="a" style="left:982px;top:225.8px;width:15px;height:1px;background:#d2d2d2"></div><div class="a" style="left:982px;top:240.2px;width:15px;height:1px;background:#d2d2d2"></div><div class="a" style="left:982px;top:254.8px;width:15px;height:1px;background:#d2d2d2"></div><div class="a" style="left:982px;top:269.3px;width:15px;height:1px;background:#d2d2d2"></div><svg class="a" style="left:984.5px;top:141.2px" width="10" height="10" viewBox="0 0 10 10"><path d="M1,5L5,1.5V3.5H10V6.5H5V8.5Z" fill="#222"/><path d="M4,7.5H10" stroke="#d04030" stroke-width="1.3"/></svg><svg class="a" style="left:984.5px;top:155.6px" width="10" height="10" viewBox="0 0 10 10"><path d="M2,2L5,5L2,8M8,2L5,5L8,8M2,5H5M8,5H5" stroke="#222" stroke-width="1.3" fill="none"/></svg><svg class="a" style="left:984.5px;top:170.0px" width="10" height="10" viewBox="0 0 10 10"><path d="M1,5L5,1.5V3.5H10V6.5H5V8.5Z" fill="#333"/></svg><svg class="a" style="left:984.5px;top:185.0px" width="10" height="10" viewBox="0 0 10 10"><circle cx="5" cy="2.2" r="1.3" fill="none" stroke="#222" stroke-width=".9"/><path d="M4,3.5L3,6.5H2V8.8H8.5V6.5H7L6,3.5" fill="none" stroke="#222" stroke-width=".9"/></svg><svg class="a" style="left:984.5px;top:199.3px" width="10" height="10" viewBox="0 0 10 10"><text x="0.5" y="8.5" font-family="Liberation Sans" font-weight="bold" font-size="8" fill="#222">A</text><text x="5.6" y="8.5" font-family="Liberation Sans" font-weight="bold" font-size="5.5" fill="#222">a</text></svg><svg class="a" style="left:984.5px;top:213.3px" width="10" height="10" viewBox="0 0 10 10"><circle cx="2.5" cy="2" r="1.3" fill="none" stroke="#333" stroke-width=".8"/><circle cx="7" cy="5" r="1.6" fill="none" stroke="#333" stroke-width=".8"/><circle cx="7" cy="8.2" r="1.6" fill="none" stroke="#333" stroke-width=".8"/><path d="M2.5,3.3V6.8H5.4" stroke="#333" stroke-width=".8" fill="none"/></svg><svg class="a" style="left:984.5px;top:228.2px" width="10" height="10" viewBox="0 0 10 10"><path d="M2,8.5L8.5,1.5M3.5,8.5L9,3" stroke="#6a5040" stroke-width="1.4"/><path d="M1.5,6L4,8.8" stroke="#444" stroke-width=".9"/></svg><svg class="a" style="left:984.5px;top:242.3px" width="10" height="10" viewBox="0 0 10 10"><rect x="1" y="1.5" width="3.5" height="7" fill="#8a5a30"/><rect x="5.5" y="1.5" width="3.5" height="7" fill="#5a3a20"/><path d="M1.5,4.5H8.5" stroke="#e8d8c0" stroke-width=".8"/></svg><svg class="a" style="left:984.5px;top:257.2px" width="10" height="10" viewBox="0 0 10 10"><path d="M2,8L7.5,2.5Q9,2 9,3.5L3.5,9Q2,9.5 2,8Z" fill="#a8b0c0" stroke="#808898" stroke-width=".6"/></svg><svg class="a" style="left:984.5px;top:271.4px" width="10" height="10" viewBox="0 0 10 10"></svg><div class="a" style="left:985px;top:272px;width:8.5px;height:9px;background:#e8141e"></div><div class="a" style="left:522px;top:463.5px;width:456px;height:2px;background:#f0f0f0"></div><div class="a" style="left:522px;top:465.5px;width:456px;height:12.5px;background:linear-gradient(#cfcfcf,#c4c4c4)"></div><div class="a" style="left:522px;top:464.8px;width:456px;height:1px;background:#4a4a4a"></div><div class="a" style="left:977px;top:464.8px;width:1px;height:13.5px;background:#4a4a4a"></div><div class="a" style="left:978px;top:463.5px;width:22px;height:14.5px;background:#e8e8e8"></div><svg class="a" style="left:755px;top:466px" width="11" height="11" viewBox="0 0 48 48"><g fill="#151515" stroke="#151515" stroke-width="2.6" stroke-linejoin="round"><circle cx="24.6" cy="11.5" r="4.3"/><ellipse cx="24.8" cy="22" rx="8.4" ry="6.4"/><path d="M10.8,43.4L10.8,39C10.8,31 17,27.5 24.8,27.5C32.6,27.5 38.8,31 38.8,39L38.8,43.4Z"/></g><g fill="#1d1e24"><circle cx="24.6" cy="11.5" r="4.3"/><ellipse cx="24.8" cy="22" rx="8.4" ry="6.4"/><path d="M10.8,43.4L10.8,39C10.8,31 17,27.5 24.8,27.5C32.6,27.5 38.8,31 38.8,39L38.8,43.4Z"/></g></svg><div class="a" style="left:522px;top:478px;width:478px;height:37px;background:#3c3c3c"></div><div class="a" style="left:526px;top:480px;width:1px;height:30px;background:#e0e0e0"></div><div class="a" style="left:527px;top:495px;width:464px;height:1px;background:#e0e0e0"></div><div class="a" style="left:542.4px;top:493px;width:1px;height:5px;background:#e0e0e0"></div><div class="a" style="left:536.4px;top:510px;width:12px;text-align:center;font-size:4.5px;color:#909090;line-height:5px">2</div><div class="a" style="left:565.4px;top:493px;width:1px;height:5px;background:#e0e0e0"></div><div class="a" style="left:559.4px;top:510px;width:12px;text-align:center;font-size:4.5px;color:#909090;line-height:5px">4</div><div class="a" style="left:588.4px;top:493px;width:1px;height:5px;background:#e0e0e0"></div><div class="a" style="left:582.4px;top:510px;width:12px;text-align:center;font-size:4.5px;color:#909090;line-height:5px">6</div><div class="a" style="left:611.4px;top:493px;width:1px;height:5px;background:#e0e0e0"></div><div class="a" style="left:605.4px;top:510px;width:12px;text-align:center;font-size:4.5px;color:#909090;line-height:5px">8</div><div class="a" style="left:634.4px;top:493px;width:1px;height:5px;background:#e0e0e0"></div><div class="a" style="left:628.4px;top:510px;width:12px;text-align:center;font-size:4.5px;color:#909090;line-height:5px">10</div><div class="a" style="left:657.4px;top:493px;width:1px;height:5px;background:#e0e0e0"></div><div class="a" style="left:651.4px;top:510px;width:12px;text-align:center;font-size:4.5px;color:#909090;line-height:5px">12</div><div class="a" style="left:680.4px;top:493px;width:1px;height:5px;background:#e0e0e0"></div><div class="a" style="left:674.4px;top:510px;width:12px;text-align:center;font-size:4.5px;color:#909090;line-height:5px">14</div><div class="a" style="left:703.4px;top:493px;width:1px;height:5px;background:#e0e0e0"></div><div class="a" style="left:697.4px;top:510px;width:12px;text-align:center;font-size:4.5px;color:#909090;line-height:5px">16</div><div class="a" style="left:726.4px;top:493px;width:1px;height:5px;background:#e0e0e0"></div><div class="a" style="left:720.4px;top:510px;width:12px;text-align:center;font-size:4.5px;color:#909090;line-height:5px">18</div><div class="a" style="left:749.4px;top:493px;width:1px;height:5px;background:#e0e0e0"></div><div class="a" style="left:743.4px;top:510px;width:12px;text-align:center;font-size:4.5px;color:#909090;line-height:5px">20</div><div class="a" style="left:772.4px;top:493px;width:1px;height:5px;background:#e0e0e0"></div><div class="a" style="left:766.4px;top:510px;width:12px;text-align:center;font-size:4.5px;color:#909090;line-height:5px">22</div><div class="a" style="left:795.4px;top:493px;width:1px;height:5px;background:#e0e0e0"></div><div class="a" style="left:789.4px;top:510px;width:12px;text-align:center;font-size:4.5px;color:#909090;line-height:5px">24</div><div class="a" style="left:818.4px;top:493px;width:1px;height:5px;background:#e0e0e0"></div><div class="a" style="left:812.4px;top:510px;width:12px;text-align:center;font-size:4.5px;color:#909090;line-height:5px">26</div><div class="a" style="left:841.4px;top:493px;width:1px;height:5px;background:#e0e0e0"></div><div class="a" style="left:835.4px;top:510px;width:12px;text-align:center;font-size:4.5px;color:#909090;line-height:5px">28</div><div class="a" style="left:864.4px;top:493px;width:1px;height:5px;background:#e0e0e0"></div><div class="a" style="left:858.4px;top:510px;width:12px;text-align:center;font-size:4.5px;color:#909090;line-height:5px">30</div><div class="a" style="left:887.4px;top:493px;width:1px;height:5px;background:#e0e0e0"></div><div class="a" style="left:881.4px;top:510px;width:12px;text-align:center;font-size:4.5px;color:#909090;line-height:5px">32</div><div class="a" style="left:910.4px;top:493px;width:1px;height:5px;background:#e0e0e0"></div><div class="a" style="left:904.4px;top:510px;width:12px;text-align:center;font-size:4.5px;color:#909090;line-height:5px">34</div><div class="a" style="left:933.4px;top:493px;width:1px;height:5px;background:#e0e0e0"></div><div class="a" style="left:927.4px;top:510px;width:12px;text-align:center;font-size:4.5px;color:#909090;line-height:5px">36</div><div class="a" style="left:956.4px;top:493px;width:1px;height:5px;background:#e0e0e0"></div><div class="a" style="left:950.4px;top:510px;width:12px;text-align:center;font-size:4.5px;color:#909090;line-height:5px">38</div><div class="a" style="left:623px;top:481px;width:1px;height:30px;background:repeating-linear-gradient(#e0e0e0 0 2px,transparent 2px 3px)"></div><div class="a" style="left:807px;top:481px;width:1px;height:30px;background:repeating-linear-gradient(#e0e0e0 0 2px,transparent 2px 3px)"></div><div class="a" style="left:759.5px;top:480.5px;width:0;height:0;border-top:3px solid #8a8a8a;border-left:2px solid transparent;border-right:2px solid transparent"></div><div class="a t " style="left:980px;top:483.7px;font-size:3.5px;color:#bbb">100cp</div><div class="a" style="left:994px;top:479px;width:3.5px;height:31px;background:#b0f4f0"></div><div class="a" style="left:522px;top:515px;width:478px;height:13.5px;background:#d4d4d4"></div><div class="a" style="left:527px;top:516px;width:14px;height:12px;text-align:center;font-size:9.5px;line-height:12px;color:#2a7a2a"><svg width="6" height="9" viewBox="0 0 6 9" style="margin-top:1.5px"><path d="M3,0.5L5.8,3.8H4V8.5H2V3.8H0.2Z" fill="#2a7a2a"/></svg></div><div class="a" style="left:540px;top:516px;width:14px;height:12px;text-align:center;font-size:9.5px;line-height:12px;color:#e05a6a">&#x2715;</div><div class="a" style="left:554px;top:516px;width:14px;height:12px;text-align:center;font-size:9.5px;line-height:12px;color:#333">]</div><div class="a" style="left:568px;top:516px;width:14px;height:12px;text-align:center;font-size:9.5px;line-height:12px;color:#222">&#x265F;</div><div class="a" style="left:583px;top:516px;width:14px;height:12px;text-align:center;font-size:9.5px;line-height:12px;color:#d03040">&#x265F;</div><div class="a" style="left:597px;top:516px;width:14px;height:12px;text-align:center;font-size:9.5px;line-height:12px;color:#7a5030">&#x265E;</div><div class="a" style="left:611px;top:516px;width:14px;height:12px;text-align:center;font-size:9.5px;line-height:12px;color:#555">!!</div><div class="a" style="left:626px;top:516px;width:14px;height:12px;text-align:center;font-size:9.5px;line-height:12px;color:#555">!</div><div class="a" style="left:640px;top:516px;width:14px;height:12px;text-align:center;font-size:9.5px;line-height:12px;color:#555">!?</div><div class="a" style="left:654px;top:516px;width:14px;height:12px;text-align:center;font-size:9.5px;line-height:12px;color:#555">?!</div><div class="a" style="left:668px;top:516px;width:14px;height:12px;text-align:center;font-size:9.5px;line-height:12px;color:#555">?</div><div class="a" style="left:682px;top:516px;width:14px;height:12px;text-align:center;font-size:9.5px;line-height:12px;color:#555">??</div><div class="a" style="left:696px;top:516px;width:14px;height:12px;text-align:center;font-size:9.5px;line-height:12px;color:#555">&#x2190;</div><div class="a" style="left:710px;top:516px;width:14px;height:12px;text-align:center;font-size:9.5px;line-height:12px;color:#555">&#xB1;</div><div class="a" style="left:724px;top:516px;width:14px;height:12px;text-align:center;font-size:9.5px;line-height:12px;color:#555">&#x2A72;</div><div class="a" style="left:738px;top:516px;width:14px;height:12px;text-align:center;font-size:9.5px;line-height:12px;color:#555">=</div><div class="a" style="left:752px;top:516px;width:14px;height:12px;text-align:center;font-size:9.5px;line-height:12px;color:#555">&#x221E;</div><div class="a" style="left:766px;top:516px;width:14px;height:12px;text-align:center;font-size:9.5px;line-height:12px;color:#555">&#x2261;</div><div class="a" style="left:780px;top:516px;width:14px;height:12px;text-align:center;font-size:9.5px;line-height:12px;color:#555">&#x2213;</div><div class="a" style="left:794px;top:516px;width:14px;height:12px;text-align:center;font-size:9.5px;line-height:12px;color:#555">&#x2213;</div><div class="a" style="left:808px;top:516px;width:14px;height:12px;text-align:center;font-size:9.5px;line-height:12px;color:#555">&#x2192;</div><div class="a" style="left:822px;top:516px;width:14px;height:12px;text-align:center;font-size:9.5px;line-height:12px;color:#555">&#x21C4;</div><div class="a" style="left:836px;top:516px;width:14px;height:12px;text-align:center;font-size:9.5px;line-height:12px;color:#8a8ad0">&#x25AC;</div><div class="a" style="left:850px;top:516px;width:14px;height:12px;text-align:center;font-size:9.5px;line-height:12px;color:#f4f4f4">&#x25CF;</div><div class="a" style="left:864px;top:516px;width:14px;height:12px;text-align:center;font-size:9.5px;line-height:12px;color:#e0e0e0">&#x25CF;</div><div class="a" style="left:878px;top:516px;width:14px;height:12px;text-align:center;font-size:9.5px;line-height:12px;color:#777">&#x2702;</div><div class="a" style="left:892px;top:516px;width:14px;height:12px;text-align:center;font-size:9.5px;line-height:12px;color:#000">&#x2022;</div><div class="a" style="left:522px;top:137px;width:1px;height:328px;background:#c8c8c8"></div><div class="a" style="left:0;top:528.3px;width:1000px;height:13.7px;background:#127fd6"></div><div class="a t " style="left:5px;top:535.5px;font-size:6.3px;color:#ffffff;letter-spacing:-0.12px;-webkit-text-stroke:0.1px #fff">No action - Save Position as picture</div><div class="a" style="left:882px;top:532.5px;width:115px;height:7px;background:#4a4a4a"></div><div class="a t " style="left:884px;top:536px;font-size:5px;color:#eee">0%</div><div class="a" style="left:902px;top:533.5px;width:71px;height:5px;background:#b0aaa8;border:1px solid #fff"></div></body></html>
